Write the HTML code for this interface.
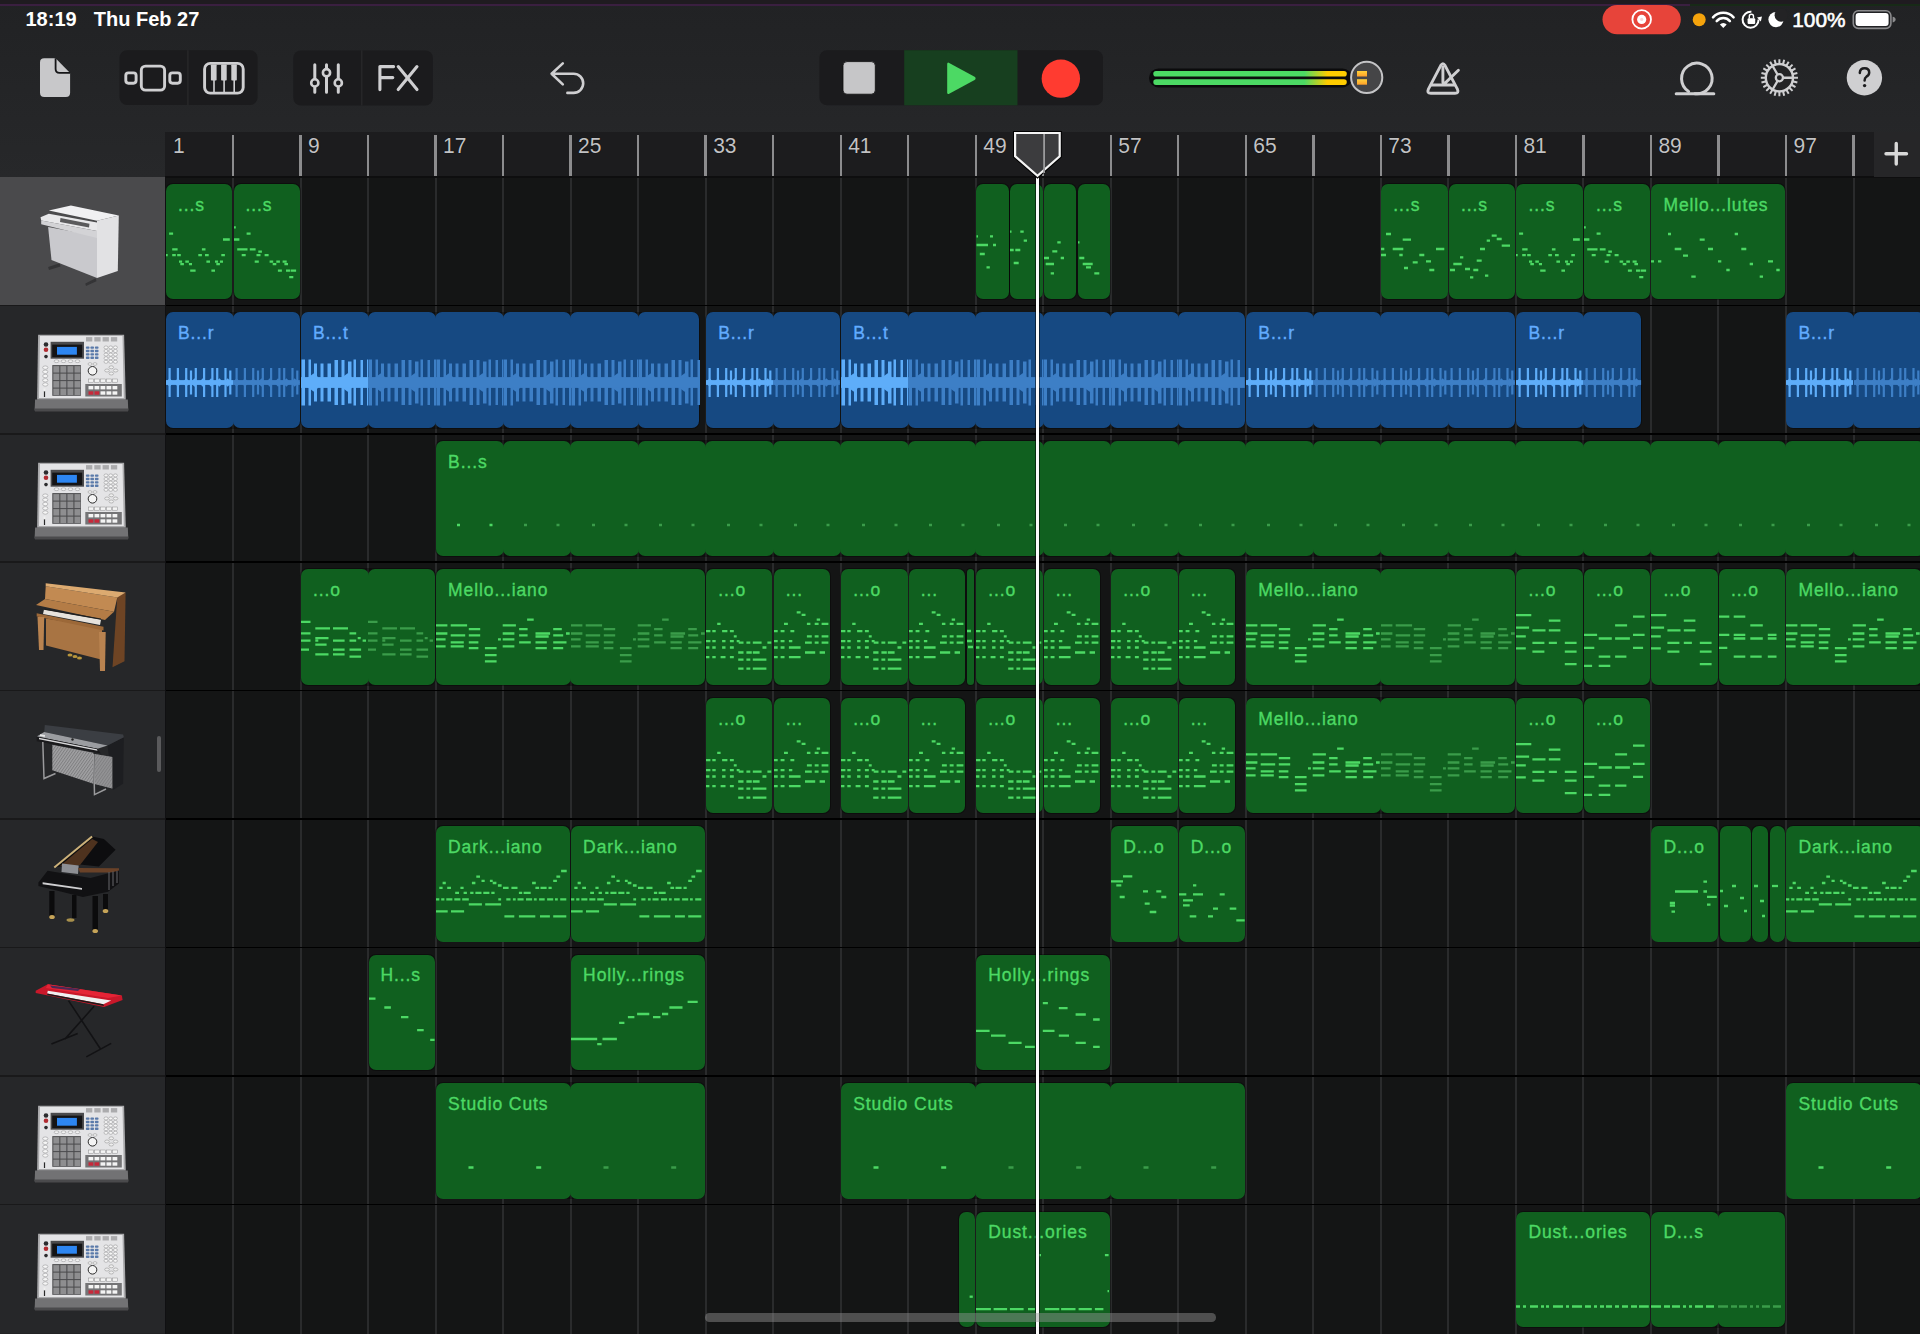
<!DOCTYPE html><html><head><meta charset="utf-8"><style>
*{margin:0;padding:0;box-sizing:border-box}
html,body{width:1920px;height:1334px;overflow:hidden;background:#232325;font-family:"Liberation Sans",sans-serif}
.a{position:absolute}
.lbl{position:absolute;font-size:17.5px;letter-spacing:0.9px;white-space:nowrap;color:#4cd964;-webkit-text-stroke:0.35px #4cd964}
.blbl{color:#62acff;-webkit-text-stroke:0.35px #62acff}
.num{position:absolute;font-size:21px;color:#c2c2c4;top:133px;transform:scaleY(1.06);transform-origin:0 0;text-shadow:0 0 1px #000}
</style></head><body>
<div class="a" style="left:0;top:0;width:1920px;height:178px;background:linear-gradient(#212224,#27282a)"></div>
<div class="a" style="left:0;top:0;width:1920px;height:4px;background:#1f1b20"></div>
<div class="a" style="left:0;top:3.5px;width:1690px;height:2.5px;background:#3a1f40"></div>
<div class="a" style="left:1690px;top:3.5px;width:230px;height:2.5px;background:#172a17"></div>
<div class="a" style="left:25.5px;top:8.2px;font-size:20px;font-weight:bold;color:#fff">18:19</div>
<div class="a" style="left:93.8px;top:8.2px;font-size:20px;font-weight:bold;color:#fff">Thu Feb 27</div>
<div class="a" style="left:165px;top:132px;width:1709px;height:45px;background:#1c1c1e"></div>
<div class="a" style="left:165px;top:177px;width:1755px;height:1157px;background:#141515"></div>
<div class="a" style="left:0;top:176.90px;width:165px;height:128.45px;background:#4a4a4c"></div>
<div class="a" style="left:0;top:305.35px;width:165px;height:128.45px;background:#262729"></div>
<div class="a" style="left:0;top:433.80px;width:165px;height:128.45px;background:#262729"></div>
<div class="a" style="left:0;top:562.25px;width:165px;height:128.45px;background:#262729"></div>
<div class="a" style="left:0;top:690.70px;width:165px;height:128.45px;background:#262729"></div>
<div class="a" style="left:0;top:819.15px;width:165px;height:128.45px;background:#262729"></div>
<div class="a" style="left:0;top:947.60px;width:165px;height:128.45px;background:#262729"></div>
<div class="a" style="left:0;top:1076.05px;width:165px;height:128.45px;background:#262729"></div>
<div class="a" style="left:0;top:1204.50px;width:165px;height:128.45px;background:#262729"></div>
<div class="num" style="left:173.00px">1</div>
<div class="a" style="left:232.02px;top:177px;width:2px;height:1157px;background:#2a2b2c"></div>
<div class="a" style="left:231.82px;top:134.5px;width:2.4px;height:42.5px;background:#8c8c8e"></div>
<div class="a" style="left:299.54px;top:177px;width:2px;height:1157px;background:#2a2b2c"></div>
<div class="a" style="left:299.34px;top:134.5px;width:2.4px;height:42.5px;background:#8c8c8e"></div>
<div class="num" style="left:308.04px">9</div>
<div class="a" style="left:367.06px;top:177px;width:2px;height:1157px;background:#2a2b2c"></div>
<div class="a" style="left:366.86px;top:134.5px;width:2.4px;height:42.5px;background:#8c8c8e"></div>
<div class="a" style="left:434.58px;top:177px;width:2px;height:1157px;background:#2a2b2c"></div>
<div class="a" style="left:434.38px;top:134.5px;width:2.4px;height:42.5px;background:#8c8c8e"></div>
<div class="num" style="left:443.08px">17</div>
<div class="a" style="left:502.10px;top:177px;width:2px;height:1157px;background:#2a2b2c"></div>
<div class="a" style="left:501.90px;top:134.5px;width:2.4px;height:42.5px;background:#8c8c8e"></div>
<div class="a" style="left:569.62px;top:177px;width:2px;height:1157px;background:#2a2b2c"></div>
<div class="a" style="left:569.42px;top:134.5px;width:2.4px;height:42.5px;background:#8c8c8e"></div>
<div class="num" style="left:578.12px">25</div>
<div class="a" style="left:637.14px;top:177px;width:2px;height:1157px;background:#2a2b2c"></div>
<div class="a" style="left:636.94px;top:134.5px;width:2.4px;height:42.5px;background:#8c8c8e"></div>
<div class="a" style="left:704.66px;top:177px;width:2px;height:1157px;background:#2a2b2c"></div>
<div class="a" style="left:704.46px;top:134.5px;width:2.4px;height:42.5px;background:#8c8c8e"></div>
<div class="num" style="left:713.16px">33</div>
<div class="a" style="left:772.18px;top:177px;width:2px;height:1157px;background:#2a2b2c"></div>
<div class="a" style="left:771.98px;top:134.5px;width:2.4px;height:42.5px;background:#8c8c8e"></div>
<div class="a" style="left:839.70px;top:177px;width:2px;height:1157px;background:#2a2b2c"></div>
<div class="a" style="left:839.50px;top:134.5px;width:2.4px;height:42.5px;background:#8c8c8e"></div>
<div class="num" style="left:848.20px">41</div>
<div class="a" style="left:907.22px;top:177px;width:2px;height:1157px;background:#2a2b2c"></div>
<div class="a" style="left:907.02px;top:134.5px;width:2.4px;height:42.5px;background:#8c8c8e"></div>
<div class="a" style="left:974.74px;top:177px;width:2px;height:1157px;background:#2a2b2c"></div>
<div class="a" style="left:974.54px;top:134.5px;width:2.4px;height:42.5px;background:#8c8c8e"></div>
<div class="num" style="left:983.24px">49</div>
<div class="a" style="left:1042.26px;top:177px;width:2px;height:1157px;background:#2a2b2c"></div>
<div class="a" style="left:1042.06px;top:134.5px;width:2.4px;height:42.5px;background:#8c8c8e"></div>
<div class="a" style="left:1109.78px;top:177px;width:2px;height:1157px;background:#2a2b2c"></div>
<div class="a" style="left:1109.58px;top:134.5px;width:2.4px;height:42.5px;background:#8c8c8e"></div>
<div class="num" style="left:1118.28px">57</div>
<div class="a" style="left:1177.30px;top:177px;width:2px;height:1157px;background:#2a2b2c"></div>
<div class="a" style="left:1177.10px;top:134.5px;width:2.4px;height:42.5px;background:#8c8c8e"></div>
<div class="a" style="left:1244.82px;top:177px;width:2px;height:1157px;background:#2a2b2c"></div>
<div class="a" style="left:1244.62px;top:134.5px;width:2.4px;height:42.5px;background:#8c8c8e"></div>
<div class="num" style="left:1253.32px">65</div>
<div class="a" style="left:1312.34px;top:177px;width:2px;height:1157px;background:#2a2b2c"></div>
<div class="a" style="left:1312.14px;top:134.5px;width:2.4px;height:42.5px;background:#8c8c8e"></div>
<div class="a" style="left:1379.86px;top:177px;width:2px;height:1157px;background:#2a2b2c"></div>
<div class="a" style="left:1379.66px;top:134.5px;width:2.4px;height:42.5px;background:#8c8c8e"></div>
<div class="num" style="left:1388.36px">73</div>
<div class="a" style="left:1447.38px;top:177px;width:2px;height:1157px;background:#2a2b2c"></div>
<div class="a" style="left:1447.18px;top:134.5px;width:2.4px;height:42.5px;background:#8c8c8e"></div>
<div class="a" style="left:1514.90px;top:177px;width:2px;height:1157px;background:#2a2b2c"></div>
<div class="a" style="left:1514.70px;top:134.5px;width:2.4px;height:42.5px;background:#8c8c8e"></div>
<div class="num" style="left:1523.40px">81</div>
<div class="a" style="left:1582.42px;top:177px;width:2px;height:1157px;background:#2a2b2c"></div>
<div class="a" style="left:1582.22px;top:134.5px;width:2.4px;height:42.5px;background:#8c8c8e"></div>
<div class="a" style="left:1649.94px;top:177px;width:2px;height:1157px;background:#2a2b2c"></div>
<div class="a" style="left:1649.74px;top:134.5px;width:2.4px;height:42.5px;background:#8c8c8e"></div>
<div class="num" style="left:1658.44px">89</div>
<div class="a" style="left:1717.46px;top:177px;width:2px;height:1157px;background:#2a2b2c"></div>
<div class="a" style="left:1717.26px;top:134.5px;width:2.4px;height:42.5px;background:#8c8c8e"></div>
<div class="a" style="left:1784.98px;top:177px;width:2px;height:1157px;background:#2a2b2c"></div>
<div class="a" style="left:1784.78px;top:134.5px;width:2.4px;height:42.5px;background:#8c8c8e"></div>
<div class="num" style="left:1793.48px">97</div>
<div class="a" style="left:1852.50px;top:177px;width:2px;height:1157px;background:#2a2b2c"></div>
<div class="a" style="left:1852.30px;top:134.5px;width:2.4px;height:42.5px;background:#8c8c8e"></div>
<div class="a" style="left:165px;top:176.10px;width:1755px;height:1.6px;background:#0e0e0f"></div>
<div class="a" style="left:0;top:304.55px;width:165px;height:1.6px;background:#19191a"></div>
<div class="a" style="left:165px;top:304.55px;width:1755px;height:1.6px;background:#000"></div>
<div class="a" style="left:0;top:433.00px;width:165px;height:1.6px;background:#19191a"></div>
<div class="a" style="left:165px;top:433.00px;width:1755px;height:1.6px;background:#000"></div>
<div class="a" style="left:0;top:561.45px;width:165px;height:1.6px;background:#19191a"></div>
<div class="a" style="left:165px;top:561.45px;width:1755px;height:1.6px;background:#000"></div>
<div class="a" style="left:0;top:689.90px;width:165px;height:1.6px;background:#19191a"></div>
<div class="a" style="left:165px;top:689.90px;width:1755px;height:1.6px;background:#000"></div>
<div class="a" style="left:0;top:818.35px;width:165px;height:1.6px;background:#19191a"></div>
<div class="a" style="left:165px;top:818.35px;width:1755px;height:1.6px;background:#000"></div>
<div class="a" style="left:0;top:946.80px;width:165px;height:1.6px;background:#19191a"></div>
<div class="a" style="left:165px;top:946.80px;width:1755px;height:1.6px;background:#000"></div>
<div class="a" style="left:0;top:1075.25px;width:165px;height:1.6px;background:#19191a"></div>
<div class="a" style="left:165px;top:1075.25px;width:1755px;height:1.6px;background:#000"></div>
<div class="a" style="left:0;top:1203.70px;width:165px;height:1.6px;background:#19191a"></div>
<div class="a" style="left:165px;top:1203.70px;width:1755px;height:1.6px;background:#000"></div>
<div class="a" style="left:1874px;top:132px;width:46px;height:45px;background:#262628"></div>
<svg class="a" style="left:1880px;top:138px" width="32" height="32"><path d="M16.25 5.5V26M6 15.75H26.5" stroke="#d8d8d8" stroke-width="3.4" stroke-linecap="round"/></svg>
<div class="a" style="left:165.20px;top:183.10px;width:67.92px;height:117.10px;background:rgba(0,0,0,0.35);border-radius:7.8px"></div>
<div class="a" style="left:166.00px;top:183.90px;width:66.32px;height:115.50px;background:#10601f;border-radius:7px"></div>
<svg class="a" style="left:166.00px;top:183.90px" width="66.3" height="115.5"><path d="M3.1 49.7H7.1M6.2 65.4H11.6M0.0 71.1H1.7M6.2 71.1H9.8M11.2 71.1H14.8M13.0 77.6H16.1M14.3 80.1H17.9M19.3 77.6H22.9M22.9 80.1H26.0M24.2 86.6H29.6M32.3 71.1H35.9M35.9 65.4H39.5M39.0 71.1H42.7M40.4 77.6H44.0M45.4 86.6H49.0M49.0 77.6H52.1M50.3 80.1H53.9M53.9 77.6H57.0M55.3 71.1H58.9M57.0 55.5H63.8" stroke="#4cd964" stroke-width="2.3" fill="none"/></svg>
<div class="lbl" style="left:178.00px;top:194.70px;max-width:52.3px;overflow:hidden">...s</div>
<div class="a" style="left:232.72px;top:183.10px;width:67.92px;height:117.10px;background:rgba(0,0,0,0.35);border-radius:7.8px"></div>
<div class="a" style="left:233.52px;top:183.90px;width:66.32px;height:115.50px;background:#10601f;border-radius:7px"></div>
<svg class="a" style="left:233.52px;top:183.90px" width="66.3" height="115.5"><path d="M0.0 43.4H1.8M0.0 55.5H5.4M12.6 49.7H16.6M3.2 65.4H13.5M15.8 65.4H21.6M24.3 67.7H27.9M7.7 71.1H11.7M22.5 71.1H26.5M30.6 71.1H34.6M20.7 77.6H24.8M35.6 77.6H39.2M38.7 80.1H42.3M42.3 77.6H45.9M48.6 77.6H52.7M50.4 80.1H54.0M43.9 86.6H47.9M52.0 86.6H56.1M56.7 86.6H62.1M55.2 93.1H59.3" stroke="#4cd964" stroke-width="2.3" fill="none"/></svg>
<div class="lbl" style="left:245.52px;top:194.70px;max-width:52.3px;overflow:hidden">...s</div>
<div class="a" style="left:975.44px;top:183.10px;width:34.16px;height:117.10px;background:rgba(0,0,0,0.35);border-radius:7.8px"></div>
<div class="a" style="left:976.24px;top:183.90px;width:32.56px;height:115.50px;background:#10601f;border-radius:7px"></div>
<svg class="a" style="left:976.24px;top:183.90px" width="32.6" height="115.5"><path d="M0.5 52.3H2.0M14.0 52.3H17.0M0.5 61.0H7.0M7.0 61.0H12.0M17.0 61.0H20.0M3.8 70.0H8.8M10.5 83.3H13.8" stroke="#4cd964" stroke-width="2.3" fill="none"/></svg>
<div class="a" style="left:1009.20px;top:183.10px;width:34.16px;height:117.10px;background:rgba(0,0,0,0.35);border-radius:7.8px"></div>
<div class="a" style="left:1010.00px;top:183.90px;width:32.56px;height:115.50px;background:#10601f;border-radius:7px"></div>
<svg class="a" style="left:1010.00px;top:183.90px" width="32.6" height="115.5"><path d="M0.0 47.7H1.5M10.3 47.7H13.7M13.7 56.7H17.0M0.0 66.0H3.7M5.3 66.0H10.3M3.7 79.0H8.7" stroke="#4cd964" stroke-width="2.3" fill="none"/></svg>
<div class="a" style="left:1042.96px;top:183.10px;width:34.16px;height:117.10px;background:rgba(0,0,0,0.35);border-radius:7.8px"></div>
<div class="a" style="left:1043.76px;top:183.90px;width:32.56px;height:115.50px;background:#10601f;border-radius:7px"></div>
<svg class="a" style="left:1043.76px;top:183.90px" width="32.6" height="115.5"><path d="M13.3 58.3H16.7M8.3 67.3H13.3M0.0 74.0H5.0M16.7 74.0H20.0M1.7 80.0H6.7M3.3 80.0H10.0M6.7 89.3H10.0" stroke="#4cd964" stroke-width="2.3" fill="none"/></svg>
<div class="a" style="left:1076.72px;top:183.10px;width:34.16px;height:117.10px;background:rgba(0,0,0,0.35);border-radius:7.8px"></div>
<div class="a" style="left:1077.52px;top:183.90px;width:32.56px;height:115.50px;background:#10601f;border-radius:7px"></div>
<svg class="a" style="left:1077.52px;top:183.90px" width="32.6" height="115.5"><path d="M0.0 58.3H1.5M1.3 74.0H6.3M4.7 80.0H14.7M8.0 83.3H13.0M16.3 89.3H21.3" stroke="#4cd964" stroke-width="2.3" fill="none"/></svg>
<div class="a" style="left:1380.56px;top:183.10px;width:67.92px;height:117.10px;background:rgba(0,0,0,0.35);border-radius:7.8px"></div>
<div class="a" style="left:1381.36px;top:183.90px;width:66.32px;height:115.50px;background:#10601f;border-radius:7px"></div>
<svg class="a" style="left:1381.36px;top:183.90px" width="66.3" height="115.5"><path d="M5.0 50.0H10.0M21.7 55.7H30.0M0.0 65.0H3.3M11.7 65.0H22.3M0.0 71.0H5.0M18.3 71.0H21.7M31.7 78.3H36.7M38.3 71.0H43.3M45.0 77.3H50.0M48.3 86.0H53.3M55.0 65.0H63.3M23.0 84.0H27.0" stroke="#4cd964" stroke-width="2.3" fill="none"/></svg>
<div class="lbl" style="left:1393.36px;top:194.70px;max-width:52.3px;overflow:hidden">...s</div>
<div class="a" style="left:1448.08px;top:183.10px;width:67.92px;height:117.10px;background:rgba(0,0,0,0.35);border-radius:7.8px"></div>
<div class="a" style="left:1448.88px;top:183.90px;width:66.32px;height:115.50px;background:#10601f;border-radius:7px"></div>
<svg class="a" style="left:1448.88px;top:183.90px" width="66.3" height="115.5"><path d="M1.0 86.0H6.0M4.3 80.0H12.7M11.0 73.3H14.3M16.0 85.0H21.0M21.0 93.3H24.3M24.3 86.0H29.3M27.7 76.7H32.7M31.0 65.0H36.0M37.7 56.7H41.0M42.7 51.7H47.7M47.7 55.0H52.7M52.7 61.7H61.0M36.0 91.7H39.3" stroke="#4cd964" stroke-width="2.3" fill="none"/></svg>
<div class="lbl" style="left:1460.88px;top:194.70px;max-width:52.3px;overflow:hidden">...s</div>
<div class="a" style="left:1515.60px;top:183.10px;width:67.92px;height:117.10px;background:rgba(0,0,0,0.35);border-radius:7.8px"></div>
<div class="a" style="left:1516.40px;top:183.90px;width:66.32px;height:115.50px;background:#10601f;border-radius:7px"></div>
<svg class="a" style="left:1516.40px;top:183.90px" width="66.3" height="115.5"><path d="M3.1 49.7H7.1M6.2 65.4H11.6M0.0 71.1H1.7M6.2 71.1H9.8M11.2 71.1H14.8M13.0 77.6H16.1M14.3 80.1H17.9M19.3 77.6H22.9M22.9 80.1H26.0M24.2 86.6H29.6M32.3 71.1H35.9M35.9 65.4H39.5M39.0 71.1H42.7M40.4 77.6H44.0M45.4 86.6H49.0M49.0 77.6H52.1M50.3 80.1H53.9M53.9 77.6H57.0M55.3 71.1H58.9M57.0 55.5H63.8" stroke="#4cd964" stroke-width="2.3" fill="none"/></svg>
<div class="lbl" style="left:1528.40px;top:194.70px;max-width:52.3px;overflow:hidden">...s</div>
<div class="a" style="left:1583.12px;top:183.10px;width:67.92px;height:117.10px;background:rgba(0,0,0,0.35);border-radius:7.8px"></div>
<div class="a" style="left:1583.92px;top:183.90px;width:66.32px;height:115.50px;background:#10601f;border-radius:7px"></div>
<svg class="a" style="left:1583.92px;top:183.90px" width="66.3" height="115.5"><path d="M0.0 43.4H1.8M0.0 55.5H5.4M12.6 49.7H16.6M3.2 65.4H13.5M15.8 65.4H21.6M24.3 67.7H27.9M7.7 71.1H11.7M22.5 71.1H26.5M30.6 71.1H34.6M20.7 77.6H24.8M35.6 77.6H39.2M38.7 80.1H42.3M42.3 77.6H45.9M48.6 77.6H52.7M50.4 80.1H54.0M43.9 86.6H47.9M52.0 86.6H56.1M56.7 86.6H62.1M55.2 93.1H59.3" stroke="#4cd964" stroke-width="2.3" fill="none"/></svg>
<div class="lbl" style="left:1595.92px;top:194.70px;max-width:52.3px;overflow:hidden">...s</div>
<div class="a" style="left:1650.64px;top:183.10px;width:135.44px;height:117.10px;background:rgba(0,0,0,0.35);border-radius:7.8px"></div>
<div class="a" style="left:1651.44px;top:183.90px;width:133.84px;height:115.50px;background:#10601f;border-radius:7px"></div>
<svg class="a" style="left:1651.44px;top:183.90px" width="133.8" height="115.5"><path d="M17.0 50.0H20.0M48.7 55.7H53.7M83.7 50.0H87.0M23.7 65.0H30.3M32.0 71.7H37.0M57.0 65.0H62.0M90.3 65.0H95.3M7.0 77.3H10.3M67.0 77.3H70.3M98.7 80.0H102.0M40.3 92.7H44.7M75.3 86.0H78.7M108.7 92.7H112.0M117.0 77.3H122.0M125.3 86.0H128.7M0.0 77.3H3.0" stroke="#4cd964" stroke-width="2.3" fill="none"/></svg>
<div class="lbl" style="left:1663.44px;top:194.70px;max-width:119.8px;overflow:hidden">Mello...lutes</div>
<div class="a" style="left:165.20px;top:311.55px;width:135.44px;height:117.10px;background:rgba(0,0,0,0.35);border-radius:7.8px"></div>
<div class="a" style="left:166.00px;top:312.35px;width:67.52px;height:115.50px;background:#164982;border-radius:7px"></div>
<div class="a" style="left:232.52px;top:312.35px;width:67.32px;height:115.50px;background:#164982;border-radius:7px"></div>
<svg class="a" style="left:166.00px;top:312.35px" width="67.0" height="116"><g fill="#5eadf9"><rect x="2.5" y="56.0" width="2.2" height="29.0"/><rect x="10.8" y="56.0" width="2.2" height="29.0"/><rect x="19.1" y="56.0" width="2.2" height="29.0"/><rect x="23.9" y="58.5" width="2.2" height="24.0"/><rect x="28.7" y="56.0" width="2.2" height="29.0"/><rect x="37.0" y="56.0" width="2.2" height="29.0"/><rect x="45.3" y="56.0" width="2.2" height="29.0"/><rect x="50.1" y="56.0" width="2.2" height="29.0"/><rect x="58.4" y="56.0" width="2.2" height="29.0"/><rect x="63.2" y="58.5" width="2.2" height="24.0"/><path d="M-0.4 70.5L3.6 66.3L7.6 70.5L3.6 74.7Z"/><path d="M7.9 70.5L11.9 66.3L15.9 70.5L11.9 74.7Z"/><path d="M16.2 70.5L20.2 66.3L24.2 70.5L20.2 74.7Z"/><path d="M24.5 70.5L28.5 66.3L32.5 70.5L28.5 74.7Z"/><path d="M32.8 70.5L36.8 66.3L40.8 70.5L36.8 74.7Z"/><path d="M41.1 70.5L45.1 66.3L49.1 70.5L45.1 74.7Z"/><path d="M49.4 70.5L53.4 66.3L57.4 70.5L53.4 74.7Z"/><path d="M57.7 70.5L61.7 66.3L65.7 70.5L61.7 74.7Z"/><path d="M66.0 70.5L70.0 66.3L74.0 70.5L70.0 74.7Z"/><rect x="0" y="68.1" width="67.0" height="4.8"/></g></svg>
<svg class="a" style="left:233.02px;top:312.35px" width="66.8" height="116"><g fill="#3d7fc6"><rect x="2.5" y="56.0" width="2.2" height="29.0"/><rect x="10.8" y="56.0" width="2.2" height="29.0"/><rect x="19.1" y="56.0" width="2.2" height="29.0"/><rect x="23.9" y="58.5" width="2.2" height="24.0"/><rect x="28.7" y="56.0" width="2.2" height="29.0"/><rect x="37.0" y="56.0" width="2.2" height="29.0"/><rect x="45.3" y="56.0" width="2.2" height="29.0"/><rect x="50.1" y="56.0" width="2.2" height="29.0"/><rect x="58.4" y="56.0" width="2.2" height="29.0"/><rect x="63.2" y="58.5" width="2.2" height="24.0"/><path d="M-0.4 70.5L3.6 66.3L7.6 70.5L3.6 74.7Z"/><path d="M7.9 70.5L11.9 66.3L15.9 70.5L11.9 74.7Z"/><path d="M16.2 70.5L20.2 66.3L24.2 70.5L20.2 74.7Z"/><path d="M24.5 70.5L28.5 66.3L32.5 70.5L28.5 74.7Z"/><path d="M32.8 70.5L36.8 66.3L40.8 70.5L36.8 74.7Z"/><path d="M41.1 70.5L45.1 66.3L49.1 70.5L45.1 74.7Z"/><path d="M49.4 70.5L53.4 66.3L57.4 70.5L53.4 74.7Z"/><path d="M57.7 70.5L61.7 66.3L65.7 70.5L61.7 74.7Z"/><path d="M66.0 70.5L70.0 66.3L74.0 70.5L70.0 74.7Z"/><rect x="0" y="68.1" width="66.8" height="4.8"/></g></svg>
<div class="lbl blbl" style="left:178.00px;top:323.15px;max-width:119.8px;overflow:hidden">B...r</div>
<div class="a" style="left:300.24px;top:311.55px;width:400.06px;height:117.10px;background:rgba(0,0,0,0.35);border-radius:7.8px"></div>
<div class="a" style="left:301.04px;top:312.35px;width:67.52px;height:115.50px;background:#164982;border-radius:7px"></div>
<div class="a" style="left:367.56px;top:312.35px;width:68.52px;height:115.50px;background:#164982;border-radius:7px"></div>
<div class="a" style="left:435.08px;top:312.35px;width:68.52px;height:115.50px;background:#164982;border-radius:7px"></div>
<div class="a" style="left:502.60px;top:312.35px;width:68.52px;height:115.50px;background:#164982;border-radius:7px"></div>
<div class="a" style="left:570.12px;top:312.35px;width:68.52px;height:115.50px;background:#164982;border-radius:7px"></div>
<div class="a" style="left:637.64px;top:312.35px;width:61.86px;height:115.50px;background:#164982;border-radius:7px"></div>
<svg class="a" style="left:301.04px;top:312.35px" width="67.0" height="116"><g fill="#5eadf9"><rect x="0.5" y="47.5" width="3.5" height="46.0"/><rect x="7.5" y="47.5" width="2.5" height="46.0"/><rect x="13.0" y="51.5" width="3" height="38.0"/><rect x="19.5" y="51.5" width="3" height="38.0"/><rect x="26.5" y="51.5" width="3.5" height="38.0"/><rect x="33.5" y="48.0" width="3.5" height="45.0"/><rect x="40.5" y="48.0" width="3" height="45.0"/><rect x="47.0" y="49.5" width="3.5" height="42.0"/><rect x="52.5" y="47.5" width="2.5" height="46.0"/><rect x="59.5" y="48.0" width="2.5" height="45.0"/><rect x="66.0" y="47.5" width="3" height="46.0"/><path d="M0.0 70.5L14.0 60.5L20.0 70.5L14.0 80.5Z"/><path d="M33.8 70.5L47.8 60.5L53.8 70.5L47.8 80.5Z"/><rect x="0" y="65.1" width="67.0" height="10.8"/></g></svg>
<svg class="a" style="left:368.06px;top:312.35px" width="67.5" height="116"><g fill="#3d7fc6"><rect x="0.5" y="47.5" width="3.5" height="46.0"/><rect x="7.5" y="47.5" width="2.5" height="46.0"/><rect x="13.0" y="51.5" width="3" height="38.0"/><rect x="19.5" y="51.5" width="3" height="38.0"/><rect x="26.5" y="51.5" width="3.5" height="38.0"/><rect x="33.5" y="48.0" width="3.5" height="45.0"/><rect x="40.5" y="48.0" width="3" height="45.0"/><rect x="47.0" y="49.5" width="3.5" height="42.0"/><rect x="52.5" y="47.5" width="2.5" height="46.0"/><rect x="59.5" y="48.0" width="2.5" height="45.0"/><rect x="66.0" y="47.5" width="3" height="46.0"/><path d="M0.0 70.5L14.0 60.5L20.0 70.5L14.0 80.5Z"/><path d="M33.8 70.5L47.8 60.5L53.8 70.5L47.8 80.5Z"/><rect x="0" y="65.1" width="67.5" height="10.8"/></g></svg>
<svg class="a" style="left:435.58px;top:312.35px" width="67.5" height="116"><g fill="#3d7fc6"><rect x="0.5" y="47.5" width="3.5" height="46.0"/><rect x="7.5" y="47.5" width="2.5" height="46.0"/><rect x="13.0" y="51.5" width="3" height="38.0"/><rect x="19.5" y="51.5" width="3" height="38.0"/><rect x="26.5" y="51.5" width="3.5" height="38.0"/><rect x="33.5" y="48.0" width="3.5" height="45.0"/><rect x="40.5" y="48.0" width="3" height="45.0"/><rect x="47.0" y="49.5" width="3.5" height="42.0"/><rect x="52.5" y="47.5" width="2.5" height="46.0"/><rect x="59.5" y="48.0" width="2.5" height="45.0"/><rect x="66.0" y="47.5" width="3" height="46.0"/><path d="M0.0 70.5L14.0 60.5L20.0 70.5L14.0 80.5Z"/><path d="M33.8 70.5L47.8 60.5L53.8 70.5L47.8 80.5Z"/><rect x="0" y="65.1" width="67.5" height="10.8"/></g></svg>
<svg class="a" style="left:503.10px;top:312.35px" width="67.5" height="116"><g fill="#3d7fc6"><rect x="0.5" y="47.5" width="3.5" height="46.0"/><rect x="7.5" y="47.5" width="2.5" height="46.0"/><rect x="13.0" y="51.5" width="3" height="38.0"/><rect x="19.5" y="51.5" width="3" height="38.0"/><rect x="26.5" y="51.5" width="3.5" height="38.0"/><rect x="33.5" y="48.0" width="3.5" height="45.0"/><rect x="40.5" y="48.0" width="3" height="45.0"/><rect x="47.0" y="49.5" width="3.5" height="42.0"/><rect x="52.5" y="47.5" width="2.5" height="46.0"/><rect x="59.5" y="48.0" width="2.5" height="45.0"/><rect x="66.0" y="47.5" width="3" height="46.0"/><path d="M0.0 70.5L14.0 60.5L20.0 70.5L14.0 80.5Z"/><path d="M33.8 70.5L47.8 60.5L53.8 70.5L47.8 80.5Z"/><rect x="0" y="65.1" width="67.5" height="10.8"/></g></svg>
<svg class="a" style="left:570.62px;top:312.35px" width="67.5" height="116"><g fill="#3d7fc6"><rect x="0.5" y="47.5" width="3.5" height="46.0"/><rect x="7.5" y="47.5" width="2.5" height="46.0"/><rect x="13.0" y="51.5" width="3" height="38.0"/><rect x="19.5" y="51.5" width="3" height="38.0"/><rect x="26.5" y="51.5" width="3.5" height="38.0"/><rect x="33.5" y="48.0" width="3.5" height="45.0"/><rect x="40.5" y="48.0" width="3" height="45.0"/><rect x="47.0" y="49.5" width="3.5" height="42.0"/><rect x="52.5" y="47.5" width="2.5" height="46.0"/><rect x="59.5" y="48.0" width="2.5" height="45.0"/><rect x="66.0" y="47.5" width="3" height="46.0"/><path d="M0.0 70.5L14.0 60.5L20.0 70.5L14.0 80.5Z"/><path d="M33.8 70.5L47.8 60.5L53.8 70.5L47.8 80.5Z"/><rect x="0" y="65.1" width="67.5" height="10.8"/></g></svg>
<svg class="a" style="left:638.14px;top:312.35px" width="61.4" height="116"><g fill="#3d7fc6"><rect x="0.5" y="47.5" width="3.5" height="46.0"/><rect x="7.5" y="47.5" width="2.5" height="46.0"/><rect x="13.0" y="51.5" width="3" height="38.0"/><rect x="19.5" y="51.5" width="3" height="38.0"/><rect x="26.5" y="51.5" width="3.5" height="38.0"/><rect x="33.5" y="48.0" width="3.5" height="45.0"/><rect x="40.5" y="48.0" width="3" height="45.0"/><rect x="47.0" y="49.5" width="3.5" height="42.0"/><rect x="52.5" y="47.5" width="2.5" height="46.0"/><rect x="59.5" y="48.0" width="2.5" height="45.0"/><path d="M0.0 70.5L14.0 60.5L20.0 70.5L14.0 80.5Z"/><path d="M33.8 70.5L47.8 60.5L53.8 70.5L47.8 80.5Z"/><rect x="0" y="65.1" width="61.4" height="10.8"/></g></svg>
<div class="lbl blbl" style="left:313.04px;top:323.15px;max-width:384.5px;overflow:hidden">B...t</div>
<div class="a" style="left:705.36px;top:311.55px;width:135.44px;height:117.10px;background:rgba(0,0,0,0.35);border-radius:7.8px"></div>
<div class="a" style="left:706.16px;top:312.35px;width:67.52px;height:115.50px;background:#164982;border-radius:7px"></div>
<div class="a" style="left:772.68px;top:312.35px;width:67.32px;height:115.50px;background:#164982;border-radius:7px"></div>
<svg class="a" style="left:706.16px;top:312.35px" width="67.0" height="116"><g fill="#5eadf9"><rect x="2.5" y="56.0" width="2.2" height="29.0"/><rect x="10.8" y="56.0" width="2.2" height="29.0"/><rect x="19.1" y="56.0" width="2.2" height="29.0"/><rect x="23.9" y="58.5" width="2.2" height="24.0"/><rect x="28.7" y="56.0" width="2.2" height="29.0"/><rect x="37.0" y="56.0" width="2.2" height="29.0"/><rect x="45.3" y="56.0" width="2.2" height="29.0"/><rect x="50.1" y="56.0" width="2.2" height="29.0"/><rect x="58.4" y="56.0" width="2.2" height="29.0"/><rect x="63.2" y="58.5" width="2.2" height="24.0"/><path d="M-0.4 70.5L3.6 66.3L7.6 70.5L3.6 74.7Z"/><path d="M7.9 70.5L11.9 66.3L15.9 70.5L11.9 74.7Z"/><path d="M16.2 70.5L20.2 66.3L24.2 70.5L20.2 74.7Z"/><path d="M24.5 70.5L28.5 66.3L32.5 70.5L28.5 74.7Z"/><path d="M32.8 70.5L36.8 66.3L40.8 70.5L36.8 74.7Z"/><path d="M41.1 70.5L45.1 66.3L49.1 70.5L45.1 74.7Z"/><path d="M49.4 70.5L53.4 66.3L57.4 70.5L53.4 74.7Z"/><path d="M57.7 70.5L61.7 66.3L65.7 70.5L61.7 74.7Z"/><path d="M66.0 70.5L70.0 66.3L74.0 70.5L70.0 74.7Z"/><rect x="0" y="68.1" width="67.0" height="4.8"/></g></svg>
<svg class="a" style="left:773.18px;top:312.35px" width="66.8" height="116"><g fill="#3d7fc6"><rect x="2.5" y="56.0" width="2.2" height="29.0"/><rect x="10.8" y="56.0" width="2.2" height="29.0"/><rect x="19.1" y="56.0" width="2.2" height="29.0"/><rect x="23.9" y="58.5" width="2.2" height="24.0"/><rect x="28.7" y="56.0" width="2.2" height="29.0"/><rect x="37.0" y="56.0" width="2.2" height="29.0"/><rect x="45.3" y="56.0" width="2.2" height="29.0"/><rect x="50.1" y="56.0" width="2.2" height="29.0"/><rect x="58.4" y="56.0" width="2.2" height="29.0"/><rect x="63.2" y="58.5" width="2.2" height="24.0"/><path d="M-0.4 70.5L3.6 66.3L7.6 70.5L3.6 74.7Z"/><path d="M7.9 70.5L11.9 66.3L15.9 70.5L11.9 74.7Z"/><path d="M16.2 70.5L20.2 66.3L24.2 70.5L20.2 74.7Z"/><path d="M24.5 70.5L28.5 66.3L32.5 70.5L28.5 74.7Z"/><path d="M32.8 70.5L36.8 66.3L40.8 70.5L36.8 74.7Z"/><path d="M41.1 70.5L45.1 66.3L49.1 70.5L45.1 74.7Z"/><path d="M49.4 70.5L53.4 66.3L57.4 70.5L53.4 74.7Z"/><path d="M57.7 70.5L61.7 66.3L65.7 70.5L61.7 74.7Z"/><path d="M66.0 70.5L70.0 66.3L74.0 70.5L70.0 74.7Z"/><rect x="0" y="68.1" width="66.8" height="4.8"/></g></svg>
<div class="lbl blbl" style="left:718.16px;top:323.15px;max-width:119.8px;overflow:hidden">B...r</div>
<div class="a" style="left:840.40px;top:311.55px;width:405.52px;height:117.10px;background:rgba(0,0,0,0.35);border-radius:7.8px"></div>
<div class="a" style="left:841.20px;top:312.35px;width:67.52px;height:115.50px;background:#164982;border-radius:7px"></div>
<div class="a" style="left:907.72px;top:312.35px;width:68.52px;height:115.50px;background:#164982;border-radius:7px"></div>
<div class="a" style="left:975.24px;top:312.35px;width:68.52px;height:115.50px;background:#164982;border-radius:7px"></div>
<div class="a" style="left:1042.76px;top:312.35px;width:68.52px;height:115.50px;background:#164982;border-radius:7px"></div>
<div class="a" style="left:1110.28px;top:312.35px;width:68.52px;height:115.50px;background:#164982;border-radius:7px"></div>
<div class="a" style="left:1177.80px;top:312.35px;width:67.32px;height:115.50px;background:#164982;border-radius:7px"></div>
<svg class="a" style="left:841.20px;top:312.35px" width="67.0" height="116"><g fill="#5eadf9"><rect x="0.5" y="47.5" width="3.5" height="46.0"/><rect x="7.5" y="47.5" width="2.5" height="46.0"/><rect x="13.0" y="51.5" width="3" height="38.0"/><rect x="19.5" y="51.5" width="3" height="38.0"/><rect x="26.5" y="51.5" width="3.5" height="38.0"/><rect x="33.5" y="48.0" width="3.5" height="45.0"/><rect x="40.5" y="48.0" width="3" height="45.0"/><rect x="47.0" y="49.5" width="3.5" height="42.0"/><rect x="52.5" y="47.5" width="2.5" height="46.0"/><rect x="59.5" y="48.0" width="2.5" height="45.0"/><rect x="66.0" y="47.5" width="3" height="46.0"/><path d="M0.0 70.5L14.0 60.5L20.0 70.5L14.0 80.5Z"/><path d="M33.8 70.5L47.8 60.5L53.8 70.5L47.8 80.5Z"/><rect x="0" y="65.1" width="67.0" height="10.8"/></g></svg>
<svg class="a" style="left:908.22px;top:312.35px" width="67.5" height="116"><g fill="#3d7fc6"><rect x="0.5" y="47.5" width="3.5" height="46.0"/><rect x="7.5" y="47.5" width="2.5" height="46.0"/><rect x="13.0" y="51.5" width="3" height="38.0"/><rect x="19.5" y="51.5" width="3" height="38.0"/><rect x="26.5" y="51.5" width="3.5" height="38.0"/><rect x="33.5" y="48.0" width="3.5" height="45.0"/><rect x="40.5" y="48.0" width="3" height="45.0"/><rect x="47.0" y="49.5" width="3.5" height="42.0"/><rect x="52.5" y="47.5" width="2.5" height="46.0"/><rect x="59.5" y="48.0" width="2.5" height="45.0"/><rect x="66.0" y="47.5" width="3" height="46.0"/><path d="M0.0 70.5L14.0 60.5L20.0 70.5L14.0 80.5Z"/><path d="M33.8 70.5L47.8 60.5L53.8 70.5L47.8 80.5Z"/><rect x="0" y="65.1" width="67.5" height="10.8"/></g></svg>
<svg class="a" style="left:975.74px;top:312.35px" width="67.5" height="116"><g fill="#3d7fc6"><rect x="0.5" y="47.5" width="3.5" height="46.0"/><rect x="7.5" y="47.5" width="2.5" height="46.0"/><rect x="13.0" y="51.5" width="3" height="38.0"/><rect x="19.5" y="51.5" width="3" height="38.0"/><rect x="26.5" y="51.5" width="3.5" height="38.0"/><rect x="33.5" y="48.0" width="3.5" height="45.0"/><rect x="40.5" y="48.0" width="3" height="45.0"/><rect x="47.0" y="49.5" width="3.5" height="42.0"/><rect x="52.5" y="47.5" width="2.5" height="46.0"/><rect x="59.5" y="48.0" width="2.5" height="45.0"/><rect x="66.0" y="47.5" width="3" height="46.0"/><path d="M0.0 70.5L14.0 60.5L20.0 70.5L14.0 80.5Z"/><path d="M33.8 70.5L47.8 60.5L53.8 70.5L47.8 80.5Z"/><rect x="0" y="65.1" width="67.5" height="10.8"/></g></svg>
<svg class="a" style="left:1043.26px;top:312.35px" width="67.5" height="116"><g fill="#3d7fc6"><rect x="0.5" y="47.5" width="3.5" height="46.0"/><rect x="7.5" y="47.5" width="2.5" height="46.0"/><rect x="13.0" y="51.5" width="3" height="38.0"/><rect x="19.5" y="51.5" width="3" height="38.0"/><rect x="26.5" y="51.5" width="3.5" height="38.0"/><rect x="33.5" y="48.0" width="3.5" height="45.0"/><rect x="40.5" y="48.0" width="3" height="45.0"/><rect x="47.0" y="49.5" width="3.5" height="42.0"/><rect x="52.5" y="47.5" width="2.5" height="46.0"/><rect x="59.5" y="48.0" width="2.5" height="45.0"/><rect x="66.0" y="47.5" width="3" height="46.0"/><path d="M0.0 70.5L14.0 60.5L20.0 70.5L14.0 80.5Z"/><path d="M33.8 70.5L47.8 60.5L53.8 70.5L47.8 80.5Z"/><rect x="0" y="65.1" width="67.5" height="10.8"/></g></svg>
<svg class="a" style="left:1110.78px;top:312.35px" width="67.5" height="116"><g fill="#3d7fc6"><rect x="0.5" y="47.5" width="3.5" height="46.0"/><rect x="7.5" y="47.5" width="2.5" height="46.0"/><rect x="13.0" y="51.5" width="3" height="38.0"/><rect x="19.5" y="51.5" width="3" height="38.0"/><rect x="26.5" y="51.5" width="3.5" height="38.0"/><rect x="33.5" y="48.0" width="3.5" height="45.0"/><rect x="40.5" y="48.0" width="3" height="45.0"/><rect x="47.0" y="49.5" width="3.5" height="42.0"/><rect x="52.5" y="47.5" width="2.5" height="46.0"/><rect x="59.5" y="48.0" width="2.5" height="45.0"/><rect x="66.0" y="47.5" width="3" height="46.0"/><path d="M0.0 70.5L14.0 60.5L20.0 70.5L14.0 80.5Z"/><path d="M33.8 70.5L47.8 60.5L53.8 70.5L47.8 80.5Z"/><rect x="0" y="65.1" width="67.5" height="10.8"/></g></svg>
<svg class="a" style="left:1178.30px;top:312.35px" width="66.8" height="116"><g fill="#3d7fc6"><rect x="0.5" y="47.5" width="3.5" height="46.0"/><rect x="7.5" y="47.5" width="2.5" height="46.0"/><rect x="13.0" y="51.5" width="3" height="38.0"/><rect x="19.5" y="51.5" width="3" height="38.0"/><rect x="26.5" y="51.5" width="3.5" height="38.0"/><rect x="33.5" y="48.0" width="3.5" height="45.0"/><rect x="40.5" y="48.0" width="3" height="45.0"/><rect x="47.0" y="49.5" width="3.5" height="42.0"/><rect x="52.5" y="47.5" width="2.5" height="46.0"/><rect x="59.5" y="48.0" width="2.5" height="45.0"/><path d="M0.0 70.5L14.0 60.5L20.0 70.5L14.0 80.5Z"/><path d="M33.8 70.5L47.8 60.5L53.8 70.5L47.8 80.5Z"/><rect x="0" y="65.1" width="66.8" height="10.8"/></g></svg>
<div class="lbl blbl" style="left:853.20px;top:323.15px;max-width:389.9px;overflow:hidden">B...t</div>
<div class="a" style="left:1245.52px;top:311.55px;width:270.48px;height:117.10px;background:rgba(0,0,0,0.35);border-radius:7.8px"></div>
<div class="a" style="left:1246.32px;top:312.35px;width:67.52px;height:115.50px;background:#164982;border-radius:7px"></div>
<div class="a" style="left:1312.84px;top:312.35px;width:68.52px;height:115.50px;background:#164982;border-radius:7px"></div>
<div class="a" style="left:1380.36px;top:312.35px;width:68.52px;height:115.50px;background:#164982;border-radius:7px"></div>
<div class="a" style="left:1447.88px;top:312.35px;width:67.32px;height:115.50px;background:#164982;border-radius:7px"></div>
<svg class="a" style="left:1246.32px;top:312.35px" width="67.0" height="116"><g fill="#5eadf9"><rect x="2.5" y="56.0" width="2.2" height="29.0"/><rect x="10.8" y="56.0" width="2.2" height="29.0"/><rect x="19.1" y="56.0" width="2.2" height="29.0"/><rect x="23.9" y="58.5" width="2.2" height="24.0"/><rect x="28.7" y="56.0" width="2.2" height="29.0"/><rect x="37.0" y="56.0" width="2.2" height="29.0"/><rect x="45.3" y="56.0" width="2.2" height="29.0"/><rect x="50.1" y="56.0" width="2.2" height="29.0"/><rect x="58.4" y="56.0" width="2.2" height="29.0"/><rect x="63.2" y="58.5" width="2.2" height="24.0"/><path d="M-0.4 70.5L3.6 66.3L7.6 70.5L3.6 74.7Z"/><path d="M7.9 70.5L11.9 66.3L15.9 70.5L11.9 74.7Z"/><path d="M16.2 70.5L20.2 66.3L24.2 70.5L20.2 74.7Z"/><path d="M24.5 70.5L28.5 66.3L32.5 70.5L28.5 74.7Z"/><path d="M32.8 70.5L36.8 66.3L40.8 70.5L36.8 74.7Z"/><path d="M41.1 70.5L45.1 66.3L49.1 70.5L45.1 74.7Z"/><path d="M49.4 70.5L53.4 66.3L57.4 70.5L53.4 74.7Z"/><path d="M57.7 70.5L61.7 66.3L65.7 70.5L61.7 74.7Z"/><path d="M66.0 70.5L70.0 66.3L74.0 70.5L70.0 74.7Z"/><rect x="0" y="68.1" width="67.0" height="4.8"/></g></svg>
<svg class="a" style="left:1313.34px;top:312.35px" width="67.5" height="116"><g fill="#3d7fc6"><rect x="2.5" y="56.0" width="2.2" height="29.0"/><rect x="10.8" y="56.0" width="2.2" height="29.0"/><rect x="19.1" y="56.0" width="2.2" height="29.0"/><rect x="23.9" y="58.5" width="2.2" height="24.0"/><rect x="28.7" y="56.0" width="2.2" height="29.0"/><rect x="37.0" y="56.0" width="2.2" height="29.0"/><rect x="45.3" y="56.0" width="2.2" height="29.0"/><rect x="50.1" y="56.0" width="2.2" height="29.0"/><rect x="58.4" y="56.0" width="2.2" height="29.0"/><rect x="63.2" y="58.5" width="2.2" height="24.0"/><path d="M-0.4 70.5L3.6 66.3L7.6 70.5L3.6 74.7Z"/><path d="M7.9 70.5L11.9 66.3L15.9 70.5L11.9 74.7Z"/><path d="M16.2 70.5L20.2 66.3L24.2 70.5L20.2 74.7Z"/><path d="M24.5 70.5L28.5 66.3L32.5 70.5L28.5 74.7Z"/><path d="M32.8 70.5L36.8 66.3L40.8 70.5L36.8 74.7Z"/><path d="M41.1 70.5L45.1 66.3L49.1 70.5L45.1 74.7Z"/><path d="M49.4 70.5L53.4 66.3L57.4 70.5L53.4 74.7Z"/><path d="M57.7 70.5L61.7 66.3L65.7 70.5L61.7 74.7Z"/><path d="M66.0 70.5L70.0 66.3L74.0 70.5L70.0 74.7Z"/><rect x="0" y="68.1" width="67.5" height="4.8"/></g></svg>
<svg class="a" style="left:1380.86px;top:312.35px" width="67.5" height="116"><g fill="#3d7fc6"><rect x="2.5" y="56.0" width="2.2" height="29.0"/><rect x="10.8" y="56.0" width="2.2" height="29.0"/><rect x="19.1" y="56.0" width="2.2" height="29.0"/><rect x="23.9" y="58.5" width="2.2" height="24.0"/><rect x="28.7" y="56.0" width="2.2" height="29.0"/><rect x="37.0" y="56.0" width="2.2" height="29.0"/><rect x="45.3" y="56.0" width="2.2" height="29.0"/><rect x="50.1" y="56.0" width="2.2" height="29.0"/><rect x="58.4" y="56.0" width="2.2" height="29.0"/><rect x="63.2" y="58.5" width="2.2" height="24.0"/><path d="M-0.4 70.5L3.6 66.3L7.6 70.5L3.6 74.7Z"/><path d="M7.9 70.5L11.9 66.3L15.9 70.5L11.9 74.7Z"/><path d="M16.2 70.5L20.2 66.3L24.2 70.5L20.2 74.7Z"/><path d="M24.5 70.5L28.5 66.3L32.5 70.5L28.5 74.7Z"/><path d="M32.8 70.5L36.8 66.3L40.8 70.5L36.8 74.7Z"/><path d="M41.1 70.5L45.1 66.3L49.1 70.5L45.1 74.7Z"/><path d="M49.4 70.5L53.4 66.3L57.4 70.5L53.4 74.7Z"/><path d="M57.7 70.5L61.7 66.3L65.7 70.5L61.7 74.7Z"/><path d="M66.0 70.5L70.0 66.3L74.0 70.5L70.0 74.7Z"/><rect x="0" y="68.1" width="67.5" height="4.8"/></g></svg>
<svg class="a" style="left:1448.38px;top:312.35px" width="66.8" height="116"><g fill="#3d7fc6"><rect x="2.5" y="56.0" width="2.2" height="29.0"/><rect x="10.8" y="56.0" width="2.2" height="29.0"/><rect x="19.1" y="56.0" width="2.2" height="29.0"/><rect x="23.9" y="58.5" width="2.2" height="24.0"/><rect x="28.7" y="56.0" width="2.2" height="29.0"/><rect x="37.0" y="56.0" width="2.2" height="29.0"/><rect x="45.3" y="56.0" width="2.2" height="29.0"/><rect x="50.1" y="56.0" width="2.2" height="29.0"/><rect x="58.4" y="56.0" width="2.2" height="29.0"/><rect x="63.2" y="58.5" width="2.2" height="24.0"/><path d="M-0.4 70.5L3.6 66.3L7.6 70.5L3.6 74.7Z"/><path d="M7.9 70.5L11.9 66.3L15.9 70.5L11.9 74.7Z"/><path d="M16.2 70.5L20.2 66.3L24.2 70.5L20.2 74.7Z"/><path d="M24.5 70.5L28.5 66.3L32.5 70.5L28.5 74.7Z"/><path d="M32.8 70.5L36.8 66.3L40.8 70.5L36.8 74.7Z"/><path d="M41.1 70.5L45.1 66.3L49.1 70.5L45.1 74.7Z"/><path d="M49.4 70.5L53.4 66.3L57.4 70.5L53.4 74.7Z"/><path d="M57.7 70.5L61.7 66.3L65.7 70.5L61.7 74.7Z"/><path d="M66.0 70.5L70.0 66.3L74.0 70.5L70.0 74.7Z"/><rect x="0" y="68.1" width="66.8" height="4.8"/></g></svg>
<div class="lbl blbl" style="left:1258.32px;top:323.15px;max-width:254.9px;overflow:hidden">B...r</div>
<div class="a" style="left:1515.60px;top:311.55px;width:126.70px;height:117.10px;background:rgba(0,0,0,0.35);border-radius:7.8px"></div>
<div class="a" style="left:1516.40px;top:312.35px;width:67.52px;height:115.50px;background:#164982;border-radius:7px"></div>
<div class="a" style="left:1582.92px;top:312.35px;width:58.58px;height:115.50px;background:#164982;border-radius:7px"></div>
<svg class="a" style="left:1516.40px;top:312.35px" width="67.0" height="116"><g fill="#5eadf9"><rect x="2.5" y="56.0" width="2.2" height="29.0"/><rect x="10.8" y="56.0" width="2.2" height="29.0"/><rect x="19.1" y="56.0" width="2.2" height="29.0"/><rect x="23.9" y="58.5" width="2.2" height="24.0"/><rect x="28.7" y="56.0" width="2.2" height="29.0"/><rect x="37.0" y="56.0" width="2.2" height="29.0"/><rect x="45.3" y="56.0" width="2.2" height="29.0"/><rect x="50.1" y="56.0" width="2.2" height="29.0"/><rect x="58.4" y="56.0" width="2.2" height="29.0"/><rect x="63.2" y="58.5" width="2.2" height="24.0"/><path d="M-0.4 70.5L3.6 66.3L7.6 70.5L3.6 74.7Z"/><path d="M7.9 70.5L11.9 66.3L15.9 70.5L11.9 74.7Z"/><path d="M16.2 70.5L20.2 66.3L24.2 70.5L20.2 74.7Z"/><path d="M24.5 70.5L28.5 66.3L32.5 70.5L28.5 74.7Z"/><path d="M32.8 70.5L36.8 66.3L40.8 70.5L36.8 74.7Z"/><path d="M41.1 70.5L45.1 66.3L49.1 70.5L45.1 74.7Z"/><path d="M49.4 70.5L53.4 66.3L57.4 70.5L53.4 74.7Z"/><path d="M57.7 70.5L61.7 66.3L65.7 70.5L61.7 74.7Z"/><path d="M66.0 70.5L70.0 66.3L74.0 70.5L70.0 74.7Z"/><rect x="0" y="68.1" width="67.0" height="4.8"/></g></svg>
<svg class="a" style="left:1583.42px;top:312.35px" width="58.1" height="116"><g fill="#3d7fc6"><rect x="2.5" y="56.0" width="2.2" height="29.0"/><rect x="10.8" y="56.0" width="2.2" height="29.0"/><rect x="19.1" y="56.0" width="2.2" height="29.0"/><rect x="23.9" y="58.5" width="2.2" height="24.0"/><rect x="28.7" y="56.0" width="2.2" height="29.0"/><rect x="37.0" y="56.0" width="2.2" height="29.0"/><rect x="45.3" y="56.0" width="2.2" height="29.0"/><rect x="50.1" y="56.0" width="2.2" height="29.0"/><path d="M-0.4 70.5L3.6 66.3L7.6 70.5L3.6 74.7Z"/><path d="M7.9 70.5L11.9 66.3L15.9 70.5L11.9 74.7Z"/><path d="M16.2 70.5L20.2 66.3L24.2 70.5L20.2 74.7Z"/><path d="M24.5 70.5L28.5 66.3L32.5 70.5L28.5 74.7Z"/><path d="M32.8 70.5L36.8 66.3L40.8 70.5L36.8 74.7Z"/><path d="M41.1 70.5L45.1 66.3L49.1 70.5L45.1 74.7Z"/><path d="M49.4 70.5L53.4 66.3L57.4 70.5L53.4 74.7Z"/><rect x="0" y="68.1" width="58.1" height="4.8"/></g></svg>
<div class="lbl blbl" style="left:1528.40px;top:323.15px;max-width:111.1px;overflow:hidden">B...r</div>
<div class="a" style="left:1785.68px;top:311.55px;width:140.12px;height:117.10px;background:rgba(0,0,0,0.35);border-radius:7.8px"></div>
<div class="a" style="left:1786.48px;top:312.35px;width:67.52px;height:115.50px;background:#164982;border-radius:7px"></div>
<div class="a" style="left:1853.00px;top:312.35px;width:72.00px;height:115.50px;background:#164982;border-radius:7px"></div>
<svg class="a" style="left:1786.48px;top:312.35px" width="67.0" height="116"><g fill="#5eadf9"><rect x="2.5" y="56.0" width="2.2" height="29.0"/><rect x="10.8" y="56.0" width="2.2" height="29.0"/><rect x="19.1" y="56.0" width="2.2" height="29.0"/><rect x="23.9" y="58.5" width="2.2" height="24.0"/><rect x="28.7" y="56.0" width="2.2" height="29.0"/><rect x="37.0" y="56.0" width="2.2" height="29.0"/><rect x="45.3" y="56.0" width="2.2" height="29.0"/><rect x="50.1" y="56.0" width="2.2" height="29.0"/><rect x="58.4" y="56.0" width="2.2" height="29.0"/><rect x="63.2" y="58.5" width="2.2" height="24.0"/><path d="M-0.4 70.5L3.6 66.3L7.6 70.5L3.6 74.7Z"/><path d="M7.9 70.5L11.9 66.3L15.9 70.5L11.9 74.7Z"/><path d="M16.2 70.5L20.2 66.3L24.2 70.5L20.2 74.7Z"/><path d="M24.5 70.5L28.5 66.3L32.5 70.5L28.5 74.7Z"/><path d="M32.8 70.5L36.8 66.3L40.8 70.5L36.8 74.7Z"/><path d="M41.1 70.5L45.1 66.3L49.1 70.5L45.1 74.7Z"/><path d="M49.4 70.5L53.4 66.3L57.4 70.5L53.4 74.7Z"/><path d="M57.7 70.5L61.7 66.3L65.7 70.5L61.7 74.7Z"/><path d="M66.0 70.5L70.0 66.3L74.0 70.5L70.0 74.7Z"/><rect x="0" y="68.1" width="67.0" height="4.8"/></g></svg>
<svg class="a" style="left:1853.50px;top:312.35px" width="71.5" height="116"><g fill="#3d7fc6"><rect x="2.5" y="56.0" width="2.2" height="29.0"/><rect x="10.8" y="56.0" width="2.2" height="29.0"/><rect x="19.1" y="56.0" width="2.2" height="29.0"/><rect x="23.9" y="58.5" width="2.2" height="24.0"/><rect x="28.7" y="56.0" width="2.2" height="29.0"/><rect x="37.0" y="56.0" width="2.2" height="29.0"/><rect x="45.3" y="56.0" width="2.2" height="29.0"/><rect x="50.1" y="56.0" width="2.2" height="29.0"/><rect x="58.4" y="56.0" width="2.2" height="29.0"/><rect x="63.2" y="58.5" width="2.2" height="24.0"/><path d="M-0.4 70.5L3.6 66.3L7.6 70.5L3.6 74.7Z"/><path d="M7.9 70.5L11.9 66.3L15.9 70.5L11.9 74.7Z"/><path d="M16.2 70.5L20.2 66.3L24.2 70.5L20.2 74.7Z"/><path d="M24.5 70.5L28.5 66.3L32.5 70.5L28.5 74.7Z"/><path d="M32.8 70.5L36.8 66.3L40.8 70.5L36.8 74.7Z"/><path d="M41.1 70.5L45.1 66.3L49.1 70.5L45.1 74.7Z"/><path d="M49.4 70.5L53.4 66.3L57.4 70.5L53.4 74.7Z"/><path d="M57.7 70.5L61.7 66.3L65.7 70.5L61.7 74.7Z"/><path d="M66.0 70.5L70.0 66.3L74.0 70.5L70.0 74.7Z"/><rect x="0" y="68.1" width="71.5" height="4.8"/></g></svg>
<div class="lbl blbl" style="left:1798.48px;top:323.15px;max-width:124.5px;overflow:hidden">B...r</div>
<div class="a" style="left:435.28px;top:440.00px;width:1490.52px;height:117.10px;background:rgba(0,0,0,0.35);border-radius:7.8px"></div>
<div class="a" style="left:436.08px;top:440.80px;width:67.52px;height:115.50px;background:#10601f;border-radius:7px"></div>
<div class="a" style="left:502.60px;top:440.80px;width:68.52px;height:115.50px;background:#10601f;border-radius:7px"></div>
<div class="a" style="left:570.12px;top:440.80px;width:68.52px;height:115.50px;background:#10601f;border-radius:7px"></div>
<div class="a" style="left:637.64px;top:440.80px;width:68.52px;height:115.50px;background:#10601f;border-radius:7px"></div>
<div class="a" style="left:705.16px;top:440.80px;width:68.52px;height:115.50px;background:#10601f;border-radius:7px"></div>
<div class="a" style="left:772.68px;top:440.80px;width:68.52px;height:115.50px;background:#10601f;border-radius:7px"></div>
<div class="a" style="left:840.20px;top:440.80px;width:68.52px;height:115.50px;background:#10601f;border-radius:7px"></div>
<div class="a" style="left:907.72px;top:440.80px;width:68.52px;height:115.50px;background:#10601f;border-radius:7px"></div>
<div class="a" style="left:975.24px;top:440.80px;width:68.52px;height:115.50px;background:#10601f;border-radius:7px"></div>
<div class="a" style="left:1042.76px;top:440.80px;width:68.52px;height:115.50px;background:#10601f;border-radius:7px"></div>
<div class="a" style="left:1110.28px;top:440.80px;width:68.52px;height:115.50px;background:#10601f;border-radius:7px"></div>
<div class="a" style="left:1177.80px;top:440.80px;width:68.52px;height:115.50px;background:#10601f;border-radius:7px"></div>
<div class="a" style="left:1245.32px;top:440.80px;width:68.52px;height:115.50px;background:#10601f;border-radius:7px"></div>
<div class="a" style="left:1312.84px;top:440.80px;width:68.52px;height:115.50px;background:#10601f;border-radius:7px"></div>
<div class="a" style="left:1380.36px;top:440.80px;width:68.52px;height:115.50px;background:#10601f;border-radius:7px"></div>
<div class="a" style="left:1447.88px;top:440.80px;width:68.52px;height:115.50px;background:#10601f;border-radius:7px"></div>
<div class="a" style="left:1515.40px;top:440.80px;width:68.52px;height:115.50px;background:#10601f;border-radius:7px"></div>
<div class="a" style="left:1582.92px;top:440.80px;width:68.52px;height:115.50px;background:#10601f;border-radius:7px"></div>
<div class="a" style="left:1650.44px;top:440.80px;width:68.52px;height:115.50px;background:#10601f;border-radius:7px"></div>
<div class="a" style="left:1717.96px;top:440.80px;width:68.52px;height:115.50px;background:#10601f;border-radius:7px"></div>
<div class="a" style="left:1785.48px;top:440.80px;width:68.52px;height:115.50px;background:#10601f;border-radius:7px"></div>
<div class="a" style="left:1853.00px;top:440.80px;width:72.00px;height:115.50px;background:#10601f;border-radius:7px"></div>
<svg class="a" style="left:436.08px;top:440.80px" width="67.0" height="115.5"><path d="M21.0 84.0H24.0M53.5 84.0H56.5" stroke="#4cd964" stroke-width="2.3" fill="none"/></svg>
<svg class="a" style="left:503.10px;top:440.80px" width="67.5" height="115.5"><path d="M21.0 84.0H24.0M53.5 84.0H56.5" stroke="#3a9c4a" stroke-width="2.3" fill="none"/></svg>
<svg class="a" style="left:570.62px;top:440.80px" width="67.5" height="115.5"><path d="M21.0 84.0H24.0M53.5 84.0H56.5" stroke="#3a9c4a" stroke-width="2.3" fill="none"/></svg>
<svg class="a" style="left:638.14px;top:440.80px" width="67.5" height="115.5"><path d="M21.0 84.0H24.0M53.5 84.0H56.5" stroke="#3a9c4a" stroke-width="2.3" fill="none"/></svg>
<svg class="a" style="left:705.66px;top:440.80px" width="67.5" height="115.5"><path d="M21.0 84.0H24.0M53.5 84.0H56.5" stroke="#3a9c4a" stroke-width="2.3" fill="none"/></svg>
<svg class="a" style="left:773.18px;top:440.80px" width="67.5" height="115.5"><path d="M21.0 84.0H24.0M53.5 84.0H56.5" stroke="#3a9c4a" stroke-width="2.3" fill="none"/></svg>
<svg class="a" style="left:840.70px;top:440.80px" width="67.5" height="115.5"><path d="M21.0 84.0H24.0M53.5 84.0H56.5" stroke="#3a9c4a" stroke-width="2.3" fill="none"/></svg>
<svg class="a" style="left:908.22px;top:440.80px" width="67.5" height="115.5"><path d="M21.0 84.0H24.0M53.5 84.0H56.5" stroke="#3a9c4a" stroke-width="2.3" fill="none"/></svg>
<svg class="a" style="left:975.74px;top:440.80px" width="67.5" height="115.5"><path d="M21.0 84.0H24.0M53.5 84.0H56.5" stroke="#3a9c4a" stroke-width="2.3" fill="none"/></svg>
<svg class="a" style="left:1043.26px;top:440.80px" width="67.5" height="115.5"><path d="M21.0 84.0H24.0M53.5 84.0H56.5" stroke="#3a9c4a" stroke-width="2.3" fill="none"/></svg>
<svg class="a" style="left:1110.78px;top:440.80px" width="67.5" height="115.5"><path d="M21.0 84.0H24.0M53.5 84.0H56.5" stroke="#3a9c4a" stroke-width="2.3" fill="none"/></svg>
<svg class="a" style="left:1178.30px;top:440.80px" width="67.5" height="115.5"><path d="M21.0 84.0H24.0M53.5 84.0H56.5" stroke="#3a9c4a" stroke-width="2.3" fill="none"/></svg>
<svg class="a" style="left:1245.82px;top:440.80px" width="67.5" height="115.5"><path d="M21.0 84.0H24.0M53.5 84.0H56.5" stroke="#3a9c4a" stroke-width="2.3" fill="none"/></svg>
<svg class="a" style="left:1313.34px;top:440.80px" width="67.5" height="115.5"><path d="M21.0 84.0H24.0M53.5 84.0H56.5" stroke="#3a9c4a" stroke-width="2.3" fill="none"/></svg>
<svg class="a" style="left:1380.86px;top:440.80px" width="67.5" height="115.5"><path d="M21.0 84.0H24.0M53.5 84.0H56.5" stroke="#3a9c4a" stroke-width="2.3" fill="none"/></svg>
<svg class="a" style="left:1448.38px;top:440.80px" width="67.5" height="115.5"><path d="M21.0 84.0H24.0M53.5 84.0H56.5" stroke="#3a9c4a" stroke-width="2.3" fill="none"/></svg>
<svg class="a" style="left:1515.90px;top:440.80px" width="67.5" height="115.5"><path d="M21.0 84.0H24.0M53.5 84.0H56.5" stroke="#3a9c4a" stroke-width="2.3" fill="none"/></svg>
<svg class="a" style="left:1583.42px;top:440.80px" width="67.5" height="115.5"><path d="M21.0 84.0H24.0M53.5 84.0H56.5" stroke="#3a9c4a" stroke-width="2.3" fill="none"/></svg>
<svg class="a" style="left:1650.94px;top:440.80px" width="67.5" height="115.5"><path d="M21.0 84.0H24.0M53.5 84.0H56.5" stroke="#3a9c4a" stroke-width="2.3" fill="none"/></svg>
<svg class="a" style="left:1718.46px;top:440.80px" width="67.5" height="115.5"><path d="M21.0 84.0H24.0M53.5 84.0H56.5" stroke="#3a9c4a" stroke-width="2.3" fill="none"/></svg>
<svg class="a" style="left:1785.98px;top:440.80px" width="67.5" height="115.5"><path d="M21.0 84.0H24.0M53.5 84.0H56.5" stroke="#3a9c4a" stroke-width="2.3" fill="none"/></svg>
<svg class="a" style="left:1853.50px;top:440.80px" width="71.5" height="115.5"><path d="M21.0 84.0H24.0M53.5 84.0H56.5" stroke="#3a9c4a" stroke-width="2.3" fill="none"/></svg>
<div class="lbl" style="left:448.08px;top:451.60px;max-width:1474.9px;overflow:hidden">B...s</div>
<div class="a" style="left:300.24px;top:568.45px;width:135.44px;height:117.10px;background:rgba(0,0,0,0.35);border-radius:7.8px"></div>
<div class="a" style="left:301.04px;top:569.25px;width:67.52px;height:115.50px;background:#10601f;border-radius:7px"></div>
<div class="a" style="left:367.56px;top:569.25px;width:67.32px;height:115.50px;background:#10601f;border-radius:7px"></div>
<svg class="a" style="left:301.04px;top:569.25px" width="67.0" height="115.5"><path d="M0.0 52.8H9.5M14.3 59.4H29.0M32.0 59.4H47.0M0.0 64.3H9.5M48.5 64.3H55.2M14.3 69.1H27.5M56.7 69.1H59.7M0.0 71.6H9.5M14.3 71.6H17.3M32.0 71.6H43.6M48.5 71.6H55.2M61.6 71.6H65.0M14.3 75.7H25.6M0.0 80.6H8.0M32.0 80.6H43.6M48.5 80.6H60.1M14.3 85.4H27.5M32.0 85.4H43.6M48.5 87.7H60.1" stroke="#4cd964" stroke-width="2.3" fill="none"/></svg>
<svg class="a" style="left:368.06px;top:569.25px" width="66.8" height="115.5"><path d="M0.0 52.8H9.5M14.3 59.4H29.0M32.0 59.4H47.0M0.0 64.3H9.5M48.5 64.3H55.2M14.3 69.1H27.5M56.7 69.1H59.7M0.0 71.6H9.5M14.3 71.6H17.3M32.0 71.6H43.6M48.5 71.6H55.2M61.6 71.6H65.0M14.3 75.7H25.6M0.0 80.6H8.0M32.0 80.6H43.6M48.5 80.6H60.1M14.3 85.4H27.5M32.0 85.4H43.6M48.5 87.7H60.1" stroke="#3a9c4a" stroke-width="2.3" fill="none"/></svg>
<div class="lbl" style="left:313.04px;top:580.05px;max-width:119.8px;overflow:hidden">...o</div>
<div class="a" style="left:435.28px;top:568.45px;width:270.48px;height:117.10px;background:rgba(0,0,0,0.35);border-radius:7.8px"></div>
<div class="a" style="left:436.08px;top:569.25px;width:135.04px;height:115.50px;background:#10601f;border-radius:7px"></div>
<div class="a" style="left:570.12px;top:569.25px;width:134.84px;height:115.50px;background:#10601f;border-radius:7px"></div>
<svg class="a" style="left:436.08px;top:569.25px" width="134.5" height="115.5"><path d="M0.0 56.4H11.4M14.7 56.4H31.1M0.0 64.5H11.4M14.7 66.4H29.2M0.0 70.3H9.6M14.7 73.3H27.8M0.0 77.3H9.6M14.7 77.3H27.8M32.8 60.2H44.2M32.8 66.4H44.2M32.8 73.3H42.4M32.8 79.2H42.4M48.9 79.2H60.6M48.9 86.2H60.6M48.9 92.3H60.6M62.0 70.3H64.9M66.7 56.4H79.9M66.7 64.5H78.4M66.7 70.3H78.4M66.7 77.3H78.4M91.1 50.6H97.7M83.1 60.2H91.6M83.1 66.4H91.6M83.1 73.3H94.8M99.5 64.5H114.1M99.5 67.5H112.7M99.5 73.3H110.8M99.5 79.2H110.8M117.2 60.2H125.8M117.2 66.4H127.2M117.2 73.3H130.5M117.2 79.2H127.2M130.0 64.5H133.7" stroke="#4cd964" stroke-width="2.3" fill="none"/></svg>
<svg class="a" style="left:570.62px;top:569.25px" width="134.3" height="115.5"><path d="M0.0 56.4H11.4M14.7 56.4H31.1M0.0 64.5H11.4M14.7 66.4H29.2M0.0 70.3H9.6M14.7 73.3H27.8M0.0 77.3H9.6M14.7 77.3H27.8M32.8 60.2H44.2M32.8 66.4H44.2M32.8 73.3H42.4M32.8 79.2H42.4M48.9 79.2H60.6M48.9 86.2H60.6M48.9 92.3H60.6M62.0 70.3H64.9M66.7 56.4H79.9M66.7 64.5H78.4M66.7 70.3H78.4M66.7 77.3H78.4M91.1 50.6H97.7M83.1 60.2H91.6M83.1 66.4H91.6M83.1 73.3H94.8M99.5 64.5H114.1M99.5 67.5H112.7M99.5 73.3H110.8M99.5 79.2H110.8M117.2 60.2H125.8M117.2 66.4H127.2M117.2 73.3H130.5M117.2 79.2H127.2M130.0 64.5H133.7" stroke="#3a9c4a" stroke-width="2.3" fill="none"/></svg>
<div class="lbl" style="left:448.08px;top:580.05px;max-width:254.9px;overflow:hidden">Mello...iano</div>
<div class="a" style="left:705.36px;top:568.45px;width:67.92px;height:117.10px;background:rgba(0,0,0,0.35);border-radius:7.8px"></div>
<div class="a" style="left:706.16px;top:569.25px;width:66.32px;height:115.50px;background:#10601f;border-radius:7px"></div>
<svg class="a" style="left:706.16px;top:569.25px" width="66.3" height="115.5"><path d="M11.2 54.8H14.6M0.0 62.2H4.4M6.3 62.2H9.7M16.1 62.2H21.4M23.9 62.2H27.8M27.8 67.3H30.7M0.0 72.1H4.4M6.3 72.1H9.7M16.1 72.1H19.5M23.9 72.1H27.8M30.7 72.1H33.6M32.7 73.6H37.5M40.4 73.6H44.3M46.8 73.6H55.6M61.4 73.6H65.3M0.0 78.5H3.4M6.3 78.5H9.7M16.1 78.5H19.5M23.9 78.5H27.8M56.5 78.5H60.4M32.2 83.5H37.5M40.4 83.5H45.8M46.8 83.5H53.6M0.0 88.2H3.4M6.3 88.2H9.7M14.6 88.2H19.5M23.9 88.2H27.8M32.2 90.6H37.5M40.4 90.6H44.3M46.8 90.6H60.4M32.2 99.6H37.5M40.4 99.6H44.3M46.8 99.6H60.4" stroke="#4cd964" stroke-width="2.3" fill="none"/></svg>
<div class="lbl" style="left:718.16px;top:580.05px;max-width:52.3px;overflow:hidden">...o</div>
<div class="a" style="left:772.88px;top:568.45px;width:57.92px;height:117.10px;background:rgba(0,0,0,0.35);border-radius:7.8px"></div>
<div class="a" style="left:773.68px;top:569.25px;width:56.32px;height:115.50px;background:#10601f;border-radius:7px"></div>
<svg class="a" style="left:773.68px;top:569.25px" width="56.3" height="115.5"><path d="M22.7 43.4H26.6M27.6 45.8H31.5M42.7 50.7H46.1M10.0 54.8H13.9M32.9 54.8H36.4M40.7 54.8H44.6M47.6 54.8H54.4M0.0 62.2H3.7M6.6 62.2H10.5M16.4 62.2H20.3M32.9 67.3H37.8M40.7 67.3H44.6M47.6 67.3H54.4M0.0 72.1H3.7M6.6 72.1H10.5M14.9 72.1H18.3M31.0 73.6H37.8M40.7 73.6H44.6M47.6 73.6H54.4M0.0 78.5H3.7M6.6 78.5H10.5M14.9 78.5H26.6M31.0 83.5H41.2M45.6 83.5H51.0M0.0 88.2H3.7M6.6 88.2H10.5M14.9 88.2H26.6" stroke="#4cd964" stroke-width="2.3" fill="none"/></svg>
<div class="lbl" style="left:785.68px;top:580.05px;max-width:42.3px;overflow:hidden">...</div>
<div class="a" style="left:840.40px;top:568.45px;width:67.92px;height:117.10px;background:rgba(0,0,0,0.35);border-radius:7.8px"></div>
<div class="a" style="left:841.20px;top:569.25px;width:66.32px;height:115.50px;background:#10601f;border-radius:7px"></div>
<svg class="a" style="left:841.20px;top:569.25px" width="66.3" height="115.5"><path d="M11.2 54.8H14.6M0.0 62.2H4.4M6.3 62.2H9.7M16.1 62.2H21.4M23.9 62.2H27.8M27.8 67.3H30.7M0.0 72.1H4.4M6.3 72.1H9.7M16.1 72.1H19.5M23.9 72.1H27.8M30.7 72.1H33.6M32.7 73.6H37.5M40.4 73.6H44.3M46.8 73.6H55.6M61.4 73.6H65.3M0.0 78.5H3.4M6.3 78.5H9.7M16.1 78.5H19.5M23.9 78.5H27.8M56.5 78.5H60.4M32.2 83.5H37.5M40.4 83.5H45.8M46.8 83.5H53.6M0.0 88.2H3.4M6.3 88.2H9.7M14.6 88.2H19.5M23.9 88.2H27.8M32.2 90.6H37.5M40.4 90.6H44.3M46.8 90.6H60.4M32.2 99.6H37.5M40.4 99.6H44.3M46.8 99.6H60.4" stroke="#4cd964" stroke-width="2.3" fill="none"/></svg>
<div class="lbl" style="left:853.20px;top:580.05px;max-width:52.3px;overflow:hidden">...o</div>
<div class="a" style="left:907.92px;top:568.45px;width:57.88px;height:117.10px;background:rgba(0,0,0,0.35);border-radius:7.8px"></div>
<div class="a" style="left:908.72px;top:569.25px;width:56.28px;height:115.50px;background:#10601f;border-radius:7px"></div>
<svg class="a" style="left:908.72px;top:569.25px" width="56.3" height="115.5"><path d="M22.7 43.4H26.6M27.6 45.8H31.5M42.7 50.7H46.1M10.0 54.8H13.9M32.9 54.8H36.4M40.7 54.8H44.6M47.6 54.8H54.4M0.0 62.2H3.7M6.6 62.2H10.5M16.4 62.2H20.3M32.9 67.3H37.8M40.7 67.3H44.6M47.6 67.3H54.4M0.0 72.1H3.7M6.6 72.1H10.5M14.9 72.1H18.3M31.0 73.6H37.8M40.7 73.6H44.6M47.6 73.6H54.4M0.0 78.5H3.7M6.6 78.5H10.5M14.9 78.5H26.6M31.0 83.5H41.2M45.6 83.5H51.0M0.0 88.2H3.7M6.6 88.2H10.5M14.9 88.2H26.6" stroke="#4cd964" stroke-width="2.3" fill="none"/></svg>
<div class="lbl" style="left:920.72px;top:580.05px;max-width:42.3px;overflow:hidden">...</div>
<div class="a" style="left:975.44px;top:568.45px;width:67.92px;height:117.10px;background:rgba(0,0,0,0.35);border-radius:7.8px"></div>
<div class="a" style="left:976.24px;top:569.25px;width:66.32px;height:115.50px;background:#10601f;border-radius:7px"></div>
<svg class="a" style="left:976.24px;top:569.25px" width="66.3" height="115.5"><path d="M11.2 54.8H14.6M0.0 62.2H4.4M6.3 62.2H9.7M16.1 62.2H21.4M23.9 62.2H27.8M27.8 67.3H30.7M0.0 72.1H4.4M6.3 72.1H9.7M16.1 72.1H19.5M23.9 72.1H27.8M30.7 72.1H33.6M32.7 73.6H37.5M40.4 73.6H44.3M46.8 73.6H55.6M61.4 73.6H65.3M0.0 78.5H3.4M6.3 78.5H9.7M16.1 78.5H19.5M23.9 78.5H27.8M56.5 78.5H60.4M32.2 83.5H37.5M40.4 83.5H45.8M46.8 83.5H53.6M0.0 88.2H3.4M6.3 88.2H9.7M14.6 88.2H19.5M23.9 88.2H27.8M32.2 90.6H37.5M40.4 90.6H44.3M46.8 90.6H60.4M32.2 99.6H37.5M40.4 99.6H44.3M46.8 99.6H60.4" stroke="#4cd964" stroke-width="2.3" fill="none"/></svg>
<div class="lbl" style="left:988.24px;top:580.05px;max-width:52.3px;overflow:hidden">...o</div>
<div class="a" style="left:1042.96px;top:568.45px;width:57.84px;height:117.10px;background:rgba(0,0,0,0.35);border-radius:7.8px"></div>
<div class="a" style="left:1043.76px;top:569.25px;width:56.24px;height:115.50px;background:#10601f;border-radius:7px"></div>
<svg class="a" style="left:1043.76px;top:569.25px" width="56.2" height="115.5"><path d="M22.7 43.4H26.6M27.6 45.8H31.5M42.7 50.7H46.1M10.0 54.8H13.9M32.9 54.8H36.4M40.7 54.8H44.6M47.6 54.8H54.4M0.0 62.2H3.7M6.6 62.2H10.5M16.4 62.2H20.3M32.9 67.3H37.8M40.7 67.3H44.6M47.6 67.3H54.4M0.0 72.1H3.7M6.6 72.1H10.5M14.9 72.1H18.3M31.0 73.6H37.8M40.7 73.6H44.6M47.6 73.6H54.4M0.0 78.5H3.7M6.6 78.5H10.5M14.9 78.5H26.6M31.0 83.5H41.2M45.6 83.5H51.0M0.0 88.2H3.7M6.6 88.2H10.5M14.9 88.2H26.6" stroke="#4cd964" stroke-width="2.3" fill="none"/></svg>
<div class="lbl" style="left:1055.76px;top:580.05px;max-width:42.2px;overflow:hidden">...</div>
<div class="a" style="left:1110.48px;top:568.45px;width:67.92px;height:117.10px;background:rgba(0,0,0,0.35);border-radius:7.8px"></div>
<div class="a" style="left:1111.28px;top:569.25px;width:66.32px;height:115.50px;background:#10601f;border-radius:7px"></div>
<svg class="a" style="left:1111.28px;top:569.25px" width="66.3" height="115.5"><path d="M11.2 54.8H14.6M0.0 62.2H4.4M6.3 62.2H9.7M16.1 62.2H21.4M23.9 62.2H27.8M27.8 67.3H30.7M0.0 72.1H4.4M6.3 72.1H9.7M16.1 72.1H19.5M23.9 72.1H27.8M30.7 72.1H33.6M32.7 73.6H37.5M40.4 73.6H44.3M46.8 73.6H55.6M61.4 73.6H65.3M0.0 78.5H3.4M6.3 78.5H9.7M16.1 78.5H19.5M23.9 78.5H27.8M56.5 78.5H60.4M32.2 83.5H37.5M40.4 83.5H45.8M46.8 83.5H53.6M0.0 88.2H3.4M6.3 88.2H9.7M14.6 88.2H19.5M23.9 88.2H27.8M32.2 90.6H37.5M40.4 90.6H44.3M46.8 90.6H60.4M32.2 99.6H37.5M40.4 99.6H44.3M46.8 99.6H60.4" stroke="#4cd964" stroke-width="2.3" fill="none"/></svg>
<div class="lbl" style="left:1123.28px;top:580.05px;max-width:52.3px;overflow:hidden">...o</div>
<div class="a" style="left:1178.00px;top:568.45px;width:57.80px;height:117.10px;background:rgba(0,0,0,0.35);border-radius:7.8px"></div>
<div class="a" style="left:1178.80px;top:569.25px;width:56.20px;height:115.50px;background:#10601f;border-radius:7px"></div>
<svg class="a" style="left:1178.80px;top:569.25px" width="56.2" height="115.5"><path d="M22.7 43.4H26.6M27.6 45.8H31.5M42.7 50.7H46.1M10.0 54.8H13.9M32.9 54.8H36.4M40.7 54.8H44.6M47.6 54.8H54.4M0.0 62.2H3.7M6.6 62.2H10.5M16.4 62.2H20.3M32.9 67.3H37.8M40.7 67.3H44.6M47.6 67.3H54.4M0.0 72.1H3.7M6.6 72.1H10.5M14.9 72.1H18.3M31.0 73.6H37.8M40.7 73.6H44.6M47.6 73.6H54.4M0.0 78.5H3.7M6.6 78.5H10.5M14.9 78.5H26.6M31.0 83.5H41.2M45.6 83.5H51.0M0.0 88.2H3.7M6.6 88.2H10.5M14.9 88.2H26.6" stroke="#4cd964" stroke-width="2.3" fill="none"/></svg>
<div class="lbl" style="left:1190.80px;top:580.05px;max-width:42.2px;overflow:hidden">...</div>
<div class="a" style="left:966.20px;top:568.45px;width:8.60px;height:117.10px;background:rgba(0,0,0,0.35);border-radius:7.8px"></div>
<div class="a" style="left:967.00px;top:569.25px;width:7.00px;height:115.50px;background:#10601f;border-radius:7px"></div>
<svg class="a" style="left:967.00px;top:569.25px" width="7.0" height="115.5"><path d="M0.0 62.0H4.0M0.0 72.0H5.0M1.0 78.0H6.0" stroke="#4cd964" stroke-width="2.3" fill="none"/></svg>
<div class="a" style="left:1245.52px;top:568.45px;width:270.48px;height:117.10px;background:rgba(0,0,0,0.35);border-radius:7.8px"></div>
<div class="a" style="left:1246.32px;top:569.25px;width:135.04px;height:115.50px;background:#10601f;border-radius:7px"></div>
<div class="a" style="left:1380.36px;top:569.25px;width:134.84px;height:115.50px;background:#10601f;border-radius:7px"></div>
<svg class="a" style="left:1246.32px;top:569.25px" width="134.5" height="115.5"><path d="M0.0 56.4H11.4M14.7 56.4H31.1M0.0 64.5H11.4M14.7 66.4H29.2M0.0 70.3H9.6M14.7 73.3H27.8M0.0 77.3H9.6M14.7 77.3H27.8M32.8 60.2H44.2M32.8 66.4H44.2M32.8 73.3H42.4M32.8 79.2H42.4M48.9 79.2H60.6M48.9 86.2H60.6M48.9 92.3H60.6M62.0 70.3H64.9M66.7 56.4H79.9M66.7 64.5H78.4M66.7 70.3H78.4M66.7 77.3H78.4M91.1 50.6H97.7M83.1 60.2H91.6M83.1 66.4H91.6M83.1 73.3H94.8M99.5 64.5H114.1M99.5 67.5H112.7M99.5 73.3H110.8M99.5 79.2H110.8M117.2 60.2H125.8M117.2 66.4H127.2M117.2 73.3H130.5M117.2 79.2H127.2M130.0 64.5H133.7" stroke="#4cd964" stroke-width="2.3" fill="none"/></svg>
<svg class="a" style="left:1380.86px;top:569.25px" width="134.3" height="115.5"><path d="M0.0 56.4H11.4M14.7 56.4H31.1M0.0 64.5H11.4M14.7 66.4H29.2M0.0 70.3H9.6M14.7 73.3H27.8M0.0 77.3H9.6M14.7 77.3H27.8M32.8 60.2H44.2M32.8 66.4H44.2M32.8 73.3H42.4M32.8 79.2H42.4M48.9 79.2H60.6M48.9 86.2H60.6M48.9 92.3H60.6M62.0 70.3H64.9M66.7 56.4H79.9M66.7 64.5H78.4M66.7 70.3H78.4M66.7 77.3H78.4M91.1 50.6H97.7M83.1 60.2H91.6M83.1 66.4H91.6M83.1 73.3H94.8M99.5 64.5H114.1M99.5 67.5H112.7M99.5 73.3H110.8M99.5 79.2H110.8M117.2 60.2H125.8M117.2 66.4H127.2M117.2 73.3H130.5M117.2 79.2H127.2M130.0 64.5H133.7" stroke="#3a9c4a" stroke-width="2.3" fill="none"/></svg>
<div class="lbl" style="left:1258.32px;top:580.05px;max-width:254.9px;overflow:hidden">Mello...iano</div>
<div class="a" style="left:1515.60px;top:568.45px;width:67.92px;height:117.10px;background:rgba(0,0,0,0.35);border-radius:7.8px"></div>
<div class="a" style="left:1516.40px;top:569.25px;width:66.32px;height:115.50px;background:#10601f;border-radius:7px"></div>
<svg class="a" style="left:1516.40px;top:569.25px" width="66.3" height="115.5"><path d="M0.0 46.1H15.3M32.8 51.6H44.4M0.0 58.6H13.1M16.4 61.4H29.5M32.8 61.4H44.4M0.0 67.3H9.8M16.4 73.9H28.4M32.8 73.9H40.9M48.8 73.9H60.6M0.0 79.4H9.8M16.4 82.6H28.4M48.8 82.6H60.6M48.8 95.1H60.6" stroke="#4cd964" stroke-width="2.3" fill="none"/></svg>
<div class="lbl" style="left:1528.40px;top:580.05px;max-width:52.3px;overflow:hidden">...o</div>
<div class="a" style="left:1583.12px;top:568.45px;width:67.92px;height:117.10px;background:rgba(0,0,0,0.35);border-radius:7.8px"></div>
<div class="a" style="left:1583.92px;top:569.25px;width:66.32px;height:115.50px;background:#10601f;border-radius:7px"></div>
<svg class="a" style="left:1583.92px;top:569.25px" width="66.3" height="115.5"><path d="M49.0 47.6H60.6M31.1 56.4H43.1M0.0 65.8H13.1M14.7 69.5H27.8M31.1 69.5H45.9M49.0 65.8H60.6M0.0 78.9H10.3M49.0 78.9H59.1M14.7 87.7H26.3M31.1 87.7H42.4M0.0 96.8H8.1M14.7 96.8H26.3" stroke="#4cd964" stroke-width="2.3" fill="none"/></svg>
<div class="lbl" style="left:1595.92px;top:580.05px;max-width:52.3px;overflow:hidden">...o</div>
<div class="a" style="left:1650.64px;top:568.45px;width:67.92px;height:117.10px;background:rgba(0,0,0,0.35);border-radius:7.8px"></div>
<div class="a" style="left:1651.44px;top:569.25px;width:66.32px;height:115.50px;background:#10601f;border-radius:7px"></div>
<svg class="a" style="left:1651.44px;top:569.25px" width="66.3" height="115.5"><path d="M0.0 46.1H15.3M32.8 51.6H44.4M0.0 58.6H13.1M16.4 61.4H29.5M32.8 61.4H44.4M0.0 67.3H9.8M16.4 73.9H28.4M32.8 73.9H40.9M48.8 73.9H60.6M0.0 79.4H9.8M16.4 82.6H28.4M48.8 82.6H60.6M48.8 95.1H60.6" stroke="#4cd964" stroke-width="2.3" fill="none"/></svg>
<div class="lbl" style="left:1663.44px;top:580.05px;max-width:52.3px;overflow:hidden">...o</div>
<div class="a" style="left:1718.16px;top:568.45px;width:67.92px;height:117.10px;background:rgba(0,0,0,0.35);border-radius:7.8px"></div>
<div class="a" style="left:1718.96px;top:569.25px;width:66.32px;height:115.50px;background:#10601f;border-radius:7px"></div>
<svg class="a" style="left:1718.96px;top:569.25px" width="66.3" height="115.5"><path d="M0.0 47.6H10.3M14.7 47.6H26.3M31.3 56.4H43.8M0.0 65.8H10.3M14.7 65.8H26.3M14.7 69.5H26.3M31.3 69.5H43.8M48.8 65.8H57.5M48.8 69.5H57.5M0.0 78.9H8.3M14.7 87.7H26.3M31.3 87.7H42.7M48.8 87.7H57.5" stroke="#4cd964" stroke-width="2.3" fill="none"/></svg>
<div class="lbl" style="left:1730.96px;top:580.05px;max-width:52.3px;overflow:hidden">...o</div>
<div class="a" style="left:1785.68px;top:568.45px;width:140.12px;height:117.10px;background:rgba(0,0,0,0.35);border-radius:7.8px"></div>
<div class="a" style="left:1786.48px;top:569.25px;width:135.04px;height:115.50px;background:#10601f;border-radius:7px"></div>
<div class="a" style="left:1920.52px;top:569.25px;width:4.48px;height:115.50px;background:#10601f;border-radius:7px"></div>
<svg class="a" style="left:1786.48px;top:569.25px" width="134.5" height="115.5"><path d="M0.0 56.4H11.4M14.7 56.4H31.1M0.0 64.5H11.4M14.7 66.4H29.2M0.0 70.3H9.6M14.7 73.3H27.8M0.0 77.3H9.6M14.7 77.3H27.8M32.8 60.2H44.2M32.8 66.4H44.2M32.8 73.3H42.4M32.8 79.2H42.4M48.9 79.2H60.6M48.9 86.2H60.6M48.9 92.3H60.6M62.0 70.3H64.9M66.7 56.4H79.9M66.7 64.5H78.4M66.7 70.3H78.4M66.7 77.3H78.4M91.1 50.6H97.7M83.1 60.2H91.6M83.1 66.4H91.6M83.1 73.3H94.8M99.5 64.5H114.1M99.5 67.5H112.7M99.5 73.3H110.8M99.5 79.2H110.8M117.2 60.2H125.8M117.2 66.4H127.2M117.2 73.3H130.5M117.2 79.2H127.2M130.0 64.5H133.7" stroke="#4cd964" stroke-width="2.3" fill="none"/></svg>
<svg class="a" style="left:1921.02px;top:569.25px" width="4.0" height="115.5"><path d="M0.0 56.4H3.5M0.0 64.5H3.5M0.0 70.3H3.5M0.0 77.3H3.5" stroke="#3a9c4a" stroke-width="2.3" fill="none"/></svg>
<div class="lbl" style="left:1798.48px;top:580.05px;max-width:124.5px;overflow:hidden">Mello...iano</div>
<div class="a" style="left:705.36px;top:696.90px;width:67.92px;height:117.10px;background:rgba(0,0,0,0.35);border-radius:7.8px"></div>
<div class="a" style="left:706.16px;top:697.70px;width:66.32px;height:115.50px;background:#10601f;border-radius:7px"></div>
<svg class="a" style="left:706.16px;top:697.70px" width="66.3" height="115.5"><path d="M11.2 54.8H14.6M0.0 62.2H4.4M6.3 62.2H9.7M16.1 62.2H21.4M23.9 62.2H27.8M27.8 67.3H30.7M0.0 72.1H4.4M6.3 72.1H9.7M16.1 72.1H19.5M23.9 72.1H27.8M30.7 72.1H33.6M32.7 73.6H37.5M40.4 73.6H44.3M46.8 73.6H55.6M61.4 73.6H65.3M0.0 78.5H3.4M6.3 78.5H9.7M16.1 78.5H19.5M23.9 78.5H27.8M56.5 78.5H60.4M32.2 83.5H37.5M40.4 83.5H45.8M46.8 83.5H53.6M0.0 88.2H3.4M6.3 88.2H9.7M14.6 88.2H19.5M23.9 88.2H27.8M32.2 90.6H37.5M40.4 90.6H44.3M46.8 90.6H60.4M32.2 99.6H37.5M40.4 99.6H44.3M46.8 99.6H60.4" stroke="#4cd964" stroke-width="2.3" fill="none"/></svg>
<div class="lbl" style="left:718.16px;top:708.50px;max-width:52.3px;overflow:hidden">...o</div>
<div class="a" style="left:772.88px;top:696.90px;width:57.92px;height:117.10px;background:rgba(0,0,0,0.35);border-radius:7.8px"></div>
<div class="a" style="left:773.68px;top:697.70px;width:56.32px;height:115.50px;background:#10601f;border-radius:7px"></div>
<svg class="a" style="left:773.68px;top:697.70px" width="56.3" height="115.5"><path d="M22.7 43.4H26.6M27.6 45.8H31.5M42.7 50.7H46.1M10.0 54.8H13.9M32.9 54.8H36.4M40.7 54.8H44.6M47.6 54.8H54.4M0.0 62.2H3.7M6.6 62.2H10.5M16.4 62.2H20.3M32.9 67.3H37.8M40.7 67.3H44.6M47.6 67.3H54.4M0.0 72.1H3.7M6.6 72.1H10.5M14.9 72.1H18.3M31.0 73.6H37.8M40.7 73.6H44.6M47.6 73.6H54.4M0.0 78.5H3.7M6.6 78.5H10.5M14.9 78.5H26.6M31.0 83.5H41.2M45.6 83.5H51.0M0.0 88.2H3.7M6.6 88.2H10.5M14.9 88.2H26.6" stroke="#4cd964" stroke-width="2.3" fill="none"/></svg>
<div class="lbl" style="left:785.68px;top:708.50px;max-width:42.3px;overflow:hidden">...</div>
<div class="a" style="left:840.40px;top:696.90px;width:67.92px;height:117.10px;background:rgba(0,0,0,0.35);border-radius:7.8px"></div>
<div class="a" style="left:841.20px;top:697.70px;width:66.32px;height:115.50px;background:#10601f;border-radius:7px"></div>
<svg class="a" style="left:841.20px;top:697.70px" width="66.3" height="115.5"><path d="M11.2 54.8H14.6M0.0 62.2H4.4M6.3 62.2H9.7M16.1 62.2H21.4M23.9 62.2H27.8M27.8 67.3H30.7M0.0 72.1H4.4M6.3 72.1H9.7M16.1 72.1H19.5M23.9 72.1H27.8M30.7 72.1H33.6M32.7 73.6H37.5M40.4 73.6H44.3M46.8 73.6H55.6M61.4 73.6H65.3M0.0 78.5H3.4M6.3 78.5H9.7M16.1 78.5H19.5M23.9 78.5H27.8M56.5 78.5H60.4M32.2 83.5H37.5M40.4 83.5H45.8M46.8 83.5H53.6M0.0 88.2H3.4M6.3 88.2H9.7M14.6 88.2H19.5M23.9 88.2H27.8M32.2 90.6H37.5M40.4 90.6H44.3M46.8 90.6H60.4M32.2 99.6H37.5M40.4 99.6H44.3M46.8 99.6H60.4" stroke="#4cd964" stroke-width="2.3" fill="none"/></svg>
<div class="lbl" style="left:853.20px;top:708.50px;max-width:52.3px;overflow:hidden">...o</div>
<div class="a" style="left:907.92px;top:696.90px;width:57.88px;height:117.10px;background:rgba(0,0,0,0.35);border-radius:7.8px"></div>
<div class="a" style="left:908.72px;top:697.70px;width:56.28px;height:115.50px;background:#10601f;border-radius:7px"></div>
<svg class="a" style="left:908.72px;top:697.70px" width="56.3" height="115.5"><path d="M22.7 43.4H26.6M27.6 45.8H31.5M42.7 50.7H46.1M10.0 54.8H13.9M32.9 54.8H36.4M40.7 54.8H44.6M47.6 54.8H54.4M0.0 62.2H3.7M6.6 62.2H10.5M16.4 62.2H20.3M32.9 67.3H37.8M40.7 67.3H44.6M47.6 67.3H54.4M0.0 72.1H3.7M6.6 72.1H10.5M14.9 72.1H18.3M31.0 73.6H37.8M40.7 73.6H44.6M47.6 73.6H54.4M0.0 78.5H3.7M6.6 78.5H10.5M14.9 78.5H26.6M31.0 83.5H41.2M45.6 83.5H51.0M0.0 88.2H3.7M6.6 88.2H10.5M14.9 88.2H26.6" stroke="#4cd964" stroke-width="2.3" fill="none"/></svg>
<div class="lbl" style="left:920.72px;top:708.50px;max-width:42.3px;overflow:hidden">...</div>
<div class="a" style="left:975.44px;top:696.90px;width:67.92px;height:117.10px;background:rgba(0,0,0,0.35);border-radius:7.8px"></div>
<div class="a" style="left:976.24px;top:697.70px;width:66.32px;height:115.50px;background:#10601f;border-radius:7px"></div>
<svg class="a" style="left:976.24px;top:697.70px" width="66.3" height="115.5"><path d="M11.2 54.8H14.6M0.0 62.2H4.4M6.3 62.2H9.7M16.1 62.2H21.4M23.9 62.2H27.8M27.8 67.3H30.7M0.0 72.1H4.4M6.3 72.1H9.7M16.1 72.1H19.5M23.9 72.1H27.8M30.7 72.1H33.6M32.7 73.6H37.5M40.4 73.6H44.3M46.8 73.6H55.6M61.4 73.6H65.3M0.0 78.5H3.4M6.3 78.5H9.7M16.1 78.5H19.5M23.9 78.5H27.8M56.5 78.5H60.4M32.2 83.5H37.5M40.4 83.5H45.8M46.8 83.5H53.6M0.0 88.2H3.4M6.3 88.2H9.7M14.6 88.2H19.5M23.9 88.2H27.8M32.2 90.6H37.5M40.4 90.6H44.3M46.8 90.6H60.4M32.2 99.6H37.5M40.4 99.6H44.3M46.8 99.6H60.4" stroke="#4cd964" stroke-width="2.3" fill="none"/></svg>
<div class="lbl" style="left:988.24px;top:708.50px;max-width:52.3px;overflow:hidden">...o</div>
<div class="a" style="left:1042.96px;top:696.90px;width:57.84px;height:117.10px;background:rgba(0,0,0,0.35);border-radius:7.8px"></div>
<div class="a" style="left:1043.76px;top:697.70px;width:56.24px;height:115.50px;background:#10601f;border-radius:7px"></div>
<svg class="a" style="left:1043.76px;top:697.70px" width="56.2" height="115.5"><path d="M22.7 43.4H26.6M27.6 45.8H31.5M42.7 50.7H46.1M10.0 54.8H13.9M32.9 54.8H36.4M40.7 54.8H44.6M47.6 54.8H54.4M0.0 62.2H3.7M6.6 62.2H10.5M16.4 62.2H20.3M32.9 67.3H37.8M40.7 67.3H44.6M47.6 67.3H54.4M0.0 72.1H3.7M6.6 72.1H10.5M14.9 72.1H18.3M31.0 73.6H37.8M40.7 73.6H44.6M47.6 73.6H54.4M0.0 78.5H3.7M6.6 78.5H10.5M14.9 78.5H26.6M31.0 83.5H41.2M45.6 83.5H51.0M0.0 88.2H3.7M6.6 88.2H10.5M14.9 88.2H26.6" stroke="#4cd964" stroke-width="2.3" fill="none"/></svg>
<div class="lbl" style="left:1055.76px;top:708.50px;max-width:42.2px;overflow:hidden">...</div>
<div class="a" style="left:1110.48px;top:696.90px;width:67.92px;height:117.10px;background:rgba(0,0,0,0.35);border-radius:7.8px"></div>
<div class="a" style="left:1111.28px;top:697.70px;width:66.32px;height:115.50px;background:#10601f;border-radius:7px"></div>
<svg class="a" style="left:1111.28px;top:697.70px" width="66.3" height="115.5"><path d="M11.2 54.8H14.6M0.0 62.2H4.4M6.3 62.2H9.7M16.1 62.2H21.4M23.9 62.2H27.8M27.8 67.3H30.7M0.0 72.1H4.4M6.3 72.1H9.7M16.1 72.1H19.5M23.9 72.1H27.8M30.7 72.1H33.6M32.7 73.6H37.5M40.4 73.6H44.3M46.8 73.6H55.6M61.4 73.6H65.3M0.0 78.5H3.4M6.3 78.5H9.7M16.1 78.5H19.5M23.9 78.5H27.8M56.5 78.5H60.4M32.2 83.5H37.5M40.4 83.5H45.8M46.8 83.5H53.6M0.0 88.2H3.4M6.3 88.2H9.7M14.6 88.2H19.5M23.9 88.2H27.8M32.2 90.6H37.5M40.4 90.6H44.3M46.8 90.6H60.4M32.2 99.6H37.5M40.4 99.6H44.3M46.8 99.6H60.4" stroke="#4cd964" stroke-width="2.3" fill="none"/></svg>
<div class="lbl" style="left:1123.28px;top:708.50px;max-width:52.3px;overflow:hidden">...o</div>
<div class="a" style="left:1178.00px;top:696.90px;width:57.80px;height:117.10px;background:rgba(0,0,0,0.35);border-radius:7.8px"></div>
<div class="a" style="left:1178.80px;top:697.70px;width:56.20px;height:115.50px;background:#10601f;border-radius:7px"></div>
<svg class="a" style="left:1178.80px;top:697.70px" width="56.2" height="115.5"><path d="M22.7 43.4H26.6M27.6 45.8H31.5M42.7 50.7H46.1M10.0 54.8H13.9M32.9 54.8H36.4M40.7 54.8H44.6M47.6 54.8H54.4M0.0 62.2H3.7M6.6 62.2H10.5M16.4 62.2H20.3M32.9 67.3H37.8M40.7 67.3H44.6M47.6 67.3H54.4M0.0 72.1H3.7M6.6 72.1H10.5M14.9 72.1H18.3M31.0 73.6H37.8M40.7 73.6H44.6M47.6 73.6H54.4M0.0 78.5H3.7M6.6 78.5H10.5M14.9 78.5H26.6M31.0 83.5H41.2M45.6 83.5H51.0M0.0 88.2H3.7M6.6 88.2H10.5M14.9 88.2H26.6" stroke="#4cd964" stroke-width="2.3" fill="none"/></svg>
<div class="lbl" style="left:1190.80px;top:708.50px;max-width:42.2px;overflow:hidden">...</div>
<div class="a" style="left:1245.52px;top:696.90px;width:270.48px;height:117.10px;background:rgba(0,0,0,0.35);border-radius:7.8px"></div>
<div class="a" style="left:1246.32px;top:697.70px;width:135.04px;height:115.50px;background:#10601f;border-radius:7px"></div>
<div class="a" style="left:1380.36px;top:697.70px;width:134.84px;height:115.50px;background:#10601f;border-radius:7px"></div>
<svg class="a" style="left:1246.32px;top:697.70px" width="134.5" height="115.5"><path d="M0.0 56.4H11.4M14.7 56.4H31.1M0.0 64.5H11.4M14.7 66.4H29.2M0.0 70.3H9.6M14.7 73.3H27.8M0.0 77.3H9.6M14.7 77.3H27.8M32.8 60.2H44.2M32.8 66.4H44.2M32.8 73.3H42.4M32.8 79.2H42.4M48.9 79.2H60.6M48.9 86.2H60.6M48.9 92.3H60.6M62.0 70.3H64.9M66.7 56.4H79.9M66.7 64.5H78.4M66.7 70.3H78.4M66.7 77.3H78.4M91.1 50.6H97.7M83.1 60.2H91.6M83.1 66.4H91.6M83.1 73.3H94.8M99.5 64.5H114.1M99.5 67.5H112.7M99.5 73.3H110.8M99.5 79.2H110.8M117.2 60.2H125.8M117.2 66.4H127.2M117.2 73.3H130.5M117.2 79.2H127.2M130.0 64.5H133.7" stroke="#4cd964" stroke-width="2.3" fill="none"/></svg>
<svg class="a" style="left:1380.86px;top:697.70px" width="134.3" height="115.5"><path d="M0.0 56.4H11.4M14.7 56.4H31.1M0.0 64.5H11.4M14.7 66.4H29.2M0.0 70.3H9.6M14.7 73.3H27.8M0.0 77.3H9.6M14.7 77.3H27.8M32.8 60.2H44.2M32.8 66.4H44.2M32.8 73.3H42.4M32.8 79.2H42.4M48.9 79.2H60.6M48.9 86.2H60.6M48.9 92.3H60.6M62.0 70.3H64.9M66.7 56.4H79.9M66.7 64.5H78.4M66.7 70.3H78.4M66.7 77.3H78.4M91.1 50.6H97.7M83.1 60.2H91.6M83.1 66.4H91.6M83.1 73.3H94.8M99.5 64.5H114.1M99.5 67.5H112.7M99.5 73.3H110.8M99.5 79.2H110.8M117.2 60.2H125.8M117.2 66.4H127.2M117.2 73.3H130.5M117.2 79.2H127.2M130.0 64.5H133.7" stroke="#3a9c4a" stroke-width="2.3" fill="none"/></svg>
<div class="lbl" style="left:1258.32px;top:708.50px;max-width:254.9px;overflow:hidden">Mello...iano</div>
<div class="a" style="left:1515.60px;top:696.90px;width:67.92px;height:117.10px;background:rgba(0,0,0,0.35);border-radius:7.8px"></div>
<div class="a" style="left:1516.40px;top:697.70px;width:66.32px;height:115.50px;background:#10601f;border-radius:7px"></div>
<svg class="a" style="left:1516.40px;top:697.70px" width="66.3" height="115.5"><path d="M0.0 46.1H15.3M32.8 51.6H44.4M0.0 58.6H13.1M16.4 61.4H29.5M32.8 61.4H44.4M0.0 67.3H9.8M16.4 73.9H28.4M32.8 73.9H40.9M48.8 73.9H60.6M0.0 79.4H9.8M16.4 82.6H28.4M48.8 82.6H60.6M48.8 95.1H60.6" stroke="#4cd964" stroke-width="2.3" fill="none"/></svg>
<div class="lbl" style="left:1528.40px;top:708.50px;max-width:52.3px;overflow:hidden">...o</div>
<div class="a" style="left:1583.12px;top:696.90px;width:67.92px;height:117.10px;background:rgba(0,0,0,0.35);border-radius:7.8px"></div>
<div class="a" style="left:1583.92px;top:697.70px;width:66.32px;height:115.50px;background:#10601f;border-radius:7px"></div>
<svg class="a" style="left:1583.92px;top:697.70px" width="66.3" height="115.5"><path d="M49.0 47.6H60.6M31.1 56.4H43.1M0.0 65.8H13.1M14.7 69.5H27.8M31.1 69.5H45.9M49.0 65.8H60.6M0.0 78.9H10.3M49.0 78.9H59.1M14.7 87.7H26.3M31.1 87.7H42.4M0.0 96.8H8.1M14.7 96.8H26.3" stroke="#4cd964" stroke-width="2.3" fill="none"/></svg>
<div class="lbl" style="left:1595.92px;top:708.50px;max-width:52.3px;overflow:hidden">...o</div>
<div class="a" style="left:435.28px;top:825.35px;width:135.44px;height:117.10px;background:rgba(0,0,0,0.35);border-radius:7.8px"></div>
<div class="a" style="left:436.08px;top:826.15px;width:133.84px;height:115.50px;background:#10601f;border-radius:7px"></div>
<svg class="a" style="left:436.08px;top:826.15px" width="133.8" height="115.5"><path d="M125.1 45.0H130.7M40.3 50.6H44.0M120.4 50.6H124.2M45.5 54.8H48.7M53.9 54.8H56.7M117.2 54.8H120.9M6.6 57.0H9.8M35.9 57.0H39.4M56.7 57.0H60.4M96.1 57.0H99.8M61.9 59.5H65.6M3.3 61.9H6.6M11.2 61.9H15.0M24.4 61.9H27.6M67.0 61.9H72.6M75.4 61.9H81.5M99.4 61.9H103.1M104.5 61.9H110.6M112.5 61.9H115.7M19.2 66.8H23.0M27.6 66.8H30.9M34.2 66.8H37.5M39.4 66.8H45.5M47.3 66.8H53.4M55.3 66.8H58.6M82.9 66.8H86.2M87.6 66.8H94.7M0.0 73.4H3.3M5.2 73.4H8.4M10.3 73.4H16.4M18.3 73.4H24.4M26.2 73.4H32.8M62.3 73.4H65.1M70.3 73.4H74.5M76.9 73.4H79.7M81.5 73.4H87.6M90.0 73.4H96.1M97.9 73.4H100.7M103.1 73.4H108.7M111.1 73.4H117.2M119.0 73.4H121.8M124.2 73.4H130.3M32.8 78.3H45.9M49.2 78.3H65.1M0.0 85.3H11.7M15.0 85.3H28.1M68.4 90.4H78.3M82.9 90.4H99.3M104.0 90.4H113.9M117.2 90.4H130.3" stroke="#4cd964" stroke-width="2.3" fill="none"/></svg>
<div class="lbl" style="left:448.08px;top:836.95px;max-width:119.8px;overflow:hidden">Dark...iano</div>
<div class="a" style="left:570.32px;top:825.35px;width:135.44px;height:117.10px;background:rgba(0,0,0,0.35);border-radius:7.8px"></div>
<div class="a" style="left:571.12px;top:826.15px;width:133.84px;height:115.50px;background:#10601f;border-radius:7px"></div>
<svg class="a" style="left:571.12px;top:826.15px" width="133.8" height="115.5"><path d="M125.1 45.0H130.7M40.3 50.6H44.0M120.4 50.6H124.2M45.5 54.8H48.7M53.9 54.8H56.7M117.2 54.8H120.9M6.6 57.0H9.8M35.9 57.0H39.4M56.7 57.0H60.4M96.1 57.0H99.8M61.9 59.5H65.6M3.3 61.9H6.6M11.2 61.9H15.0M24.4 61.9H27.6M67.0 61.9H72.6M75.4 61.9H81.5M99.4 61.9H103.1M104.5 61.9H110.6M112.5 61.9H115.7M19.2 66.8H23.0M27.6 66.8H30.9M34.2 66.8H37.5M39.4 66.8H45.5M47.3 66.8H53.4M55.3 66.8H58.6M82.9 66.8H86.2M87.6 66.8H94.7M0.0 73.4H3.3M5.2 73.4H8.4M10.3 73.4H16.4M18.3 73.4H24.4M26.2 73.4H32.8M62.3 73.4H65.1M70.3 73.4H74.5M76.9 73.4H79.7M81.5 73.4H87.6M90.0 73.4H96.1M97.9 73.4H100.7M103.1 73.4H108.7M111.1 73.4H117.2M119.0 73.4H121.8M124.2 73.4H130.3M32.8 78.3H45.9M49.2 78.3H65.1M0.0 85.3H11.7M15.0 85.3H28.1M68.4 90.4H78.3M82.9 90.4H99.3M104.0 90.4H113.9M117.2 90.4H130.3" stroke="#4cd964" stroke-width="2.3" fill="none"/></svg>
<div class="lbl" style="left:583.12px;top:836.95px;max-width:119.8px;overflow:hidden">Dark...iano</div>
<div class="a" style="left:1110.48px;top:825.35px;width:67.92px;height:117.10px;background:rgba(0,0,0,0.35);border-radius:7.8px"></div>
<div class="a" style="left:1111.28px;top:826.15px;width:66.32px;height:115.50px;background:#10601f;border-radius:7px"></div>
<svg class="a" style="left:1111.28px;top:826.15px" width="66.3" height="115.5"><path d="M0.0 55.3H12.0M12.0 50.3H21.3M5.3 59.3H10.3M8.7 71.0H13.7M32.0 65.3H37.0M45.3 65.3H50.3M50.3 71.0H55.3M33.7 77.7H38.7M38.7 86.0H45.3" stroke="#4cd964" stroke-width="2.3" fill="none"/></svg>
<div class="lbl" style="left:1123.28px;top:836.95px;max-width:52.3px;overflow:hidden">D...o</div>
<div class="a" style="left:1178.00px;top:825.35px;width:67.92px;height:117.10px;background:rgba(0,0,0,0.35);border-radius:7.8px"></div>
<div class="a" style="left:1178.80px;top:826.15px;width:66.32px;height:115.50px;background:#10601f;border-radius:7px"></div>
<svg class="a" style="left:1178.80px;top:826.15px" width="66.3" height="115.5"><path d="M14.0 59.3H17.3M0.0 68.3H7.3M4.0 74.3H14.0M14.0 68.3H24.0M4.0 79.3H10.7M10.7 90.3H17.3M29.0 90.3H34.0M34.0 82.7H39.0M40.7 68.3H45.7M50.7 82.7H57.3M57.3 94.3H60.7M60.7 94.3H65.7" stroke="#4cd964" stroke-width="2.3" fill="none"/></svg>
<div class="lbl" style="left:1190.80px;top:836.95px;max-width:52.3px;overflow:hidden">D...o</div>
<div class="a" style="left:1650.64px;top:825.35px;width:67.92px;height:117.10px;background:rgba(0,0,0,0.35);border-radius:7.8px"></div>
<div class="a" style="left:1651.44px;top:826.15px;width:66.32px;height:115.50px;background:#10601f;border-radius:7px"></div>
<svg class="a" style="left:1651.44px;top:826.15px" width="66.3" height="115.5"><path d="M24.0 65.5H47.0M18.8 76.8H24.0M18.8 79.5H24.0M20.5 85.7H24.0M52.4 55.6H56.0M52.4 65.5H56.0M56.0 70.8H65.8M56.0 78.6H59.5" stroke="#4cd964" stroke-width="2.3" fill="none"/></svg>
<div class="lbl" style="left:1663.44px;top:836.95px;max-width:52.3px;overflow:hidden">D...o</div>
<div class="a" style="left:1719.20px;top:825.35px;width:32.20px;height:117.10px;background:rgba(0,0,0,0.35);border-radius:7.8px"></div>
<div class="a" style="left:1720.00px;top:826.15px;width:30.60px;height:115.50px;background:#10601f;border-radius:7px"></div>
<svg class="a" style="left:1720.00px;top:826.15px" width="30.6" height="115.5"><path d="M0.0 65.0H3.0M12.0 60.0H16.0M20.0 72.0H24.0M4.0 80.0H8.0M24.0 85.0H27.0" stroke="#4cd964" stroke-width="2.3" fill="none"/></svg>
<div class="a" style="left:1751.20px;top:825.35px;width:17.60px;height:117.10px;background:rgba(0,0,0,0.35);border-radius:7.8px"></div>
<div class="a" style="left:1752.00px;top:826.15px;width:16.00px;height:115.50px;background:#10601f;border-radius:7px"></div>
<svg class="a" style="left:1752.00px;top:826.15px" width="16.0" height="115.5"><path d="M2.0 60.0H6.0M8.0 75.0H12.0M10.0 90.0H13.0" stroke="#4cd964" stroke-width="2.3" fill="none"/></svg>
<div class="a" style="left:1769.20px;top:825.35px;width:16.60px;height:117.10px;background:rgba(0,0,0,0.35);border-radius:7.8px"></div>
<div class="a" style="left:1770.00px;top:826.15px;width:15.00px;height:115.50px;background:#10601f;border-radius:7px"></div>
<svg class="a" style="left:1770.00px;top:826.15px" width="15.0" height="115.5"><path d="M2.0 60.0H8.0" stroke="#4cd964" stroke-width="2.3" fill="none"/></svg>
<div class="a" style="left:1785.68px;top:825.35px;width:140.12px;height:117.10px;background:rgba(0,0,0,0.35);border-radius:7.8px"></div>
<div class="a" style="left:1786.48px;top:826.15px;width:138.52px;height:115.50px;background:#10601f;border-radius:7px"></div>
<svg class="a" style="left:1786.48px;top:826.15px" width="138.5" height="115.5"><path d="M125.1 45.0H130.7M40.3 50.6H44.0M120.4 50.6H124.2M45.5 54.8H48.7M53.9 54.8H56.7M117.2 54.8H120.9M6.6 57.0H9.8M35.9 57.0H39.4M56.7 57.0H60.4M96.1 57.0H99.8M61.9 59.5H65.6M3.3 61.9H6.6M11.2 61.9H15.0M24.4 61.9H27.6M67.0 61.9H72.6M75.4 61.9H81.5M99.4 61.9H103.1M104.5 61.9H110.6M112.5 61.9H115.7M19.2 66.8H23.0M27.6 66.8H30.9M34.2 66.8H37.5M39.4 66.8H45.5M47.3 66.8H53.4M55.3 66.8H58.6M82.9 66.8H86.2M87.6 66.8H94.7M0.0 73.4H3.3M5.2 73.4H8.4M10.3 73.4H16.4M18.3 73.4H24.4M26.2 73.4H32.8M62.3 73.4H65.1M70.3 73.4H74.5M76.9 73.4H79.7M81.5 73.4H87.6M90.0 73.4H96.1M97.9 73.4H100.7M103.1 73.4H108.7M111.1 73.4H117.2M119.0 73.4H121.8M124.2 73.4H130.3M32.8 78.3H45.9M49.2 78.3H65.1M0.0 85.3H11.7M15.0 85.3H28.1M68.4 90.4H78.3M82.9 90.4H99.3M104.0 90.4H113.9M117.2 90.4H130.3" stroke="#4cd964" stroke-width="2.3" fill="none"/></svg>
<div class="lbl" style="left:1798.48px;top:836.95px;max-width:124.5px;overflow:hidden">Dark...iano</div>
<div class="a" style="left:367.76px;top:953.80px;width:67.92px;height:117.10px;background:rgba(0,0,0,0.35);border-radius:7.8px"></div>
<div class="a" style="left:368.56px;top:954.60px;width:66.32px;height:115.50px;background:#10601f;border-radius:7px"></div>
<svg class="a" style="left:368.56px;top:954.60px" width="66.3" height="115.5"><path d="M0.0 43.7H6.5M15.3 52.5H21.9M32.0 62.1H39.4M48.1 75.2H54.7M61.2 84.9H65.6" stroke="#4cd964" stroke-width="2.3" fill="none"/></svg>
<div class="lbl" style="left:380.56px;top:965.40px;max-width:52.3px;overflow:hidden">H...s</div>
<div class="a" style="left:570.32px;top:953.80px;width:135.44px;height:117.10px;background:rgba(0,0,0,0.35);border-radius:7.8px"></div>
<div class="a" style="left:571.12px;top:954.60px;width:133.84px;height:115.50px;background:#10601f;border-radius:7px"></div>
<svg class="a" style="left:571.12px;top:954.60px" width="133.8" height="115.5"><path d="M0.0 84.0H26.2M26.2 89.2H30.6M31.5 84.0H45.9M48.1 67.8H53.4M56.9 62.1H63.4M66.1 59.0H78.3M82.0 62.1H89.4M91.0 59.0H97.2M98.4 52.5H111.5M116.6 46.8H126.7" stroke="#4cd964" stroke-width="2.3" fill="none"/></svg>
<div class="lbl" style="left:583.12px;top:965.40px;max-width:119.8px;overflow:hidden">Holly...rings</div>
<div class="a" style="left:975.44px;top:953.80px;width:135.44px;height:117.10px;background:rgba(0,0,0,0.35);border-radius:7.8px"></div>
<div class="a" style="left:976.24px;top:954.60px;width:133.84px;height:115.50px;background:#10601f;border-radius:7px"></div>
<svg class="a" style="left:976.24px;top:954.60px" width="133.8" height="115.5"><path d="M0.0 75.8H13.6M15.0 80.6H29.6M32.5 87.9H45.6M49.0 91.9H58.8M66.8 48.1H71.9M66.8 75.8H78.5M82.8 53.2H91.6M82.8 80.6H93.0M99.6 59.5H109.8M99.6 87.9H109.8M117.1 64.5H123.7M117.1 91.9H123.7" stroke="#4cd964" stroke-width="2.3" fill="none"/></svg>
<div class="lbl" style="left:988.24px;top:965.40px;max-width:119.8px;overflow:hidden">Holly...rings</div>
<div class="a" style="left:435.28px;top:1082.25px;width:270.48px;height:117.10px;background:rgba(0,0,0,0.35);border-radius:7.8px"></div>
<div class="a" style="left:436.08px;top:1083.05px;width:135.04px;height:115.50px;background:#10601f;border-radius:7px"></div>
<div class="a" style="left:570.12px;top:1083.05px;width:134.84px;height:115.50px;background:#10601f;border-radius:7px"></div>
<svg class="a" style="left:436.08px;top:1083.05px" width="134.5" height="115.5"><path d="M32.5 84.5H37.5M100.2 84.5H105.2" stroke="#4cd964" stroke-width="2.3" fill="none"/></svg>
<svg class="a" style="left:570.62px;top:1083.05px" width="134.3" height="115.5"><path d="M32.5 84.5H37.5M100.2 84.5H105.2" stroke="#3a9c4a" stroke-width="2.3" fill="none"/></svg>
<div class="lbl" style="left:448.08px;top:1093.85px;max-width:254.9px;overflow:hidden">Studio Cuts</div>
<div class="a" style="left:840.40px;top:1082.25px;width:405.52px;height:117.10px;background:rgba(0,0,0,0.35);border-radius:7.8px"></div>
<div class="a" style="left:841.20px;top:1083.05px;width:135.04px;height:115.50px;background:#10601f;border-radius:7px"></div>
<div class="a" style="left:975.24px;top:1083.05px;width:136.04px;height:115.50px;background:#10601f;border-radius:7px"></div>
<div class="a" style="left:1110.28px;top:1083.05px;width:134.84px;height:115.50px;background:#10601f;border-radius:7px"></div>
<svg class="a" style="left:841.20px;top:1083.05px" width="134.5" height="115.5"><path d="M32.5 84.5H37.5M100.2 84.5H105.2" stroke="#4cd964" stroke-width="2.3" fill="none"/></svg>
<svg class="a" style="left:975.74px;top:1083.05px" width="135.0" height="115.5"><path d="M32.5 84.5H37.5M100.2 84.5H105.2" stroke="#3a9c4a" stroke-width="2.3" fill="none"/></svg>
<svg class="a" style="left:1110.78px;top:1083.05px" width="134.3" height="115.5"><path d="M32.5 84.5H37.5M100.2 84.5H105.2" stroke="#3a9c4a" stroke-width="2.3" fill="none"/></svg>
<div class="lbl" style="left:853.20px;top:1093.85px;max-width:389.9px;overflow:hidden">Studio Cuts</div>
<div class="a" style="left:1785.68px;top:1082.25px;width:140.12px;height:117.10px;background:rgba(0,0,0,0.35);border-radius:7.8px"></div>
<div class="a" style="left:1786.48px;top:1083.05px;width:135.04px;height:115.50px;background:#10601f;border-radius:7px"></div>
<div class="a" style="left:1920.52px;top:1083.05px;width:4.48px;height:115.50px;background:#10601f;border-radius:7px"></div>
<svg class="a" style="left:1786.48px;top:1083.05px" width="134.5" height="115.5"><path d="M32.5 84.5H37.5M100.2 84.5H105.2" stroke="#4cd964" stroke-width="2.3" fill="none"/></svg>
<svg class="a" style="left:1921.02px;top:1083.05px" width="4.0" height="115.5"><path d="" stroke="#3a9c4a" stroke-width="2.3" fill="none"/></svg>
<div class="lbl" style="left:1798.48px;top:1093.85px;max-width:124.5px;overflow:hidden">Studio Cuts</div>
<div class="a" style="left:958.20px;top:1210.70px;width:17.10px;height:117.10px;background:rgba(0,0,0,0.35);border-radius:7.8px"></div>
<div class="a" style="left:959.00px;top:1211.50px;width:15.50px;height:115.50px;background:#10601f;border-radius:7px"></div>
<svg class="a" style="left:959.00px;top:1211.50px" width="15.5" height="115.5"><path d="M10.6 84.7H13.8" stroke="#4cd964" stroke-width="2.3" fill="none"/></svg>
<div class="a" style="left:975.44px;top:1210.70px;width:135.44px;height:117.10px;background:rgba(0,0,0,0.35);border-radius:7.8px"></div>
<div class="a" style="left:976.24px;top:1211.50px;width:133.84px;height:115.50px;background:#10601f;border-radius:7px"></div>
<svg class="a" style="left:976.24px;top:1211.50px" width="133.8" height="115.5"><path d="M0.0 97.2H14.9M17.6 97.2H31.1M33.9 97.2H47.6M52.0 97.2H58.9M68.9 97.2H83.3M85.1 97.2H99.5M102.6 97.2H115.8M118.9 97.2H127.4M61.4 43.2H65.0M128.9 43.2H132.6M131.5 79.1H133.0" stroke="#4cd964" stroke-width="2.3" fill="none"/></svg>
<div class="lbl" style="left:988.24px;top:1222.30px;max-width:119.8px;overflow:hidden">Dust...ories</div>
<div class="a" style="left:1515.60px;top:1210.70px;width:135.44px;height:117.10px;background:rgba(0,0,0,0.35);border-radius:7.8px"></div>
<div class="a" style="left:1516.40px;top:1211.50px;width:133.84px;height:115.50px;background:#10601f;border-radius:7px"></div>
<svg class="a" style="left:1516.40px;top:1211.50px" width="133.8" height="115.5"><path d="M0.0 94.5H4.0M7.0 94.5H10.0M14.0 94.5H22.0M25.0 94.5H28.0M30.0 94.5H33.0M37.0 94.5H47.0M50.0 94.5H53.0M56.0 94.5H66.0M69.0 94.5H75.0M78.0 94.5H81.0M84.0 94.5H88.0M90.0 94.5H96.0M99.0 94.5H103.0M106.0 94.5H112.0M115.0 94.5H121.0M123.0 94.5H132.8" stroke="#4cd964" stroke-width="2.3" fill="none"/></svg>
<div class="lbl" style="left:1528.40px;top:1222.30px;max-width:119.8px;overflow:hidden">Dust...ories</div>
<div class="a" style="left:1650.64px;top:1210.70px;width:135.44px;height:117.10px;background:rgba(0,0,0,0.35);border-radius:7.8px"></div>
<div class="a" style="left:1651.44px;top:1211.50px;width:67.52px;height:115.50px;background:#10601f;border-radius:7px"></div>
<div class="a" style="left:1717.96px;top:1211.50px;width:67.32px;height:115.50px;background:#10601f;border-radius:7px"></div>
<svg class="a" style="left:1651.44px;top:1211.50px" width="67.0" height="115.5"><path d="M0.0 94.5H10.0M13.0 94.5H19.0M21.0 94.5H29.0M32.0 94.5H35.0M38.0 94.5H41.0M44.0 94.5H52.0M55.0 94.5H63.0" stroke="#4cd964" stroke-width="2.3" fill="none"/></svg>
<svg class="a" style="left:1718.46px;top:1211.50px" width="66.8" height="115.5"><path d="M0.0 94.5H10.0M13.0 94.5H19.0M21.0 94.5H29.0M32.0 94.5H35.0M38.0 94.5H41.0M44.0 94.5H52.0M55.0 94.5H63.0" stroke="#3a9c4a" stroke-width="2.3" fill="none"/></svg>
<div class="lbl" style="left:1663.44px;top:1222.30px;max-width:119.8px;overflow:hidden">D...s</div>
<div class="a" style="left:164.6px;top:177px;width:1.6px;height:1157px;background:#101012"></div>
<svg class="a" style="left:35px;top:198.00px" width="90" height="92"><polygon points="13.1,68.9 24.8,65.2 25.5,68.5 14,72" fill="#343436" /><polygon points="50.3,85.5 60.7,80.2 61.5,83.2 51,88" fill="#343436" /><polygon points="13.8,12.4 35.9,7.6 83.8,17.6 62,22.8" fill="#f0f0f2" /><polygon points="62,22.8 83.8,17.6 82.8,73.1 62,80" fill="#e2e2e4" /><polygon points="13.1,29 62,38 62,80 16.5,62" fill="#c9c9cd" /><polygon points="5.5,19.3 13.8,15.8 62,24.5 62,33 6.2,22.5" fill="#e8e8ea" /><polygon points="6.2,22.5 62,33 62,40 6.2,26.2" fill="#d3d3d6" /><polygon points="25.5,20 54.5,25.8 54,29.5 25,24" fill="#5a5a5c" /></svg>
<svg class="a" style="left:30px;top:328.00px" width="104" height="90"><polygon points="5.1,71.5 97.8,71.5 98.3,82.5 4.6,82.5" fill="#727274" /><polygon points="4.6,80.5 98.3,80.5 98,83.5 5,83.5" fill="#4a4a4c" /><polygon points="8.1,6.7 94.1,6.7 95.8,71.5 7.1,71.5" fill="#a9a9ab" /><polygon points="10,8 92.5,8 93.8,70 9,70" fill="#e4e4e6" /><rect x="20.6" y="13.8" width="33.4" height="16.9" fill="#4b4b4d"/><rect x="22.2" y="16.6" width="30" height="12.6" fill="#141416"/><rect x="27" y="18.9" width="19.9" height="7.8" fill="#2d86f2"/><rect x="56.0" y="9.1" width="6.3" height="4.4" fill="#ababad"/><rect x="64.3" y="9.1" width="6.3" height="4.4" fill="#ababad"/><rect x="72.6" y="9.1" width="6.3" height="4.4" fill="#ababad"/><rect x="80.9" y="9.1" width="6.3" height="4.4" fill="#ababad"/><rect x="55.9" y="18.4" width="3.6" height="2.4" rx="0.8" fill="#5a7aaa"/><rect x="60.4" y="18.4" width="3.6" height="2.4" rx="0.8" fill="#5a7aaa"/><rect x="64.9" y="18.4" width="3.6" height="2.4" rx="0.8" fill="#5a7aaa"/><rect x="55.9" y="21.8" width="3.6" height="2.4" rx="0.8" fill="#5a7aaa"/><rect x="60.4" y="21.8" width="3.6" height="2.4" rx="0.8" fill="#5a7aaa"/><rect x="64.9" y="21.8" width="3.6" height="2.4" rx="0.8" fill="#5a7aaa"/><rect x="55.9" y="25.2" width="3.6" height="2.4" rx="0.8" fill="#5a7aaa"/><rect x="60.4" y="25.2" width="3.6" height="2.4" rx="0.8" fill="#5a7aaa"/><rect x="64.9" y="25.2" width="3.6" height="2.4" rx="0.8" fill="#5a7aaa"/><rect x="55.9" y="28.6" width="3.6" height="2.4" rx="0.8" fill="#5a7aaa"/><rect x="60.4" y="28.6" width="3.6" height="2.4" rx="0.8" fill="#5a7aaa"/><rect x="64.9" y="28.6" width="3.6" height="2.4" rx="0.8" fill="#5a7aaa"/><ellipse cx="76.0" cy="19.4" rx="2" ry="1.5" fill="#f6f6f6" stroke="#8a8a8c" stroke-width="0.5"/><ellipse cx="80.7" cy="19.4" rx="2" ry="1.5" fill="#f6f6f6" stroke="#8a8a8c" stroke-width="0.5"/><ellipse cx="85.4" cy="19.4" rx="2" ry="1.5" fill="#f6f6f6" stroke="#8a8a8c" stroke-width="0.5"/><ellipse cx="76.0" cy="23.0" rx="2" ry="1.5" fill="#f6f6f6" stroke="#8a8a8c" stroke-width="0.5"/><ellipse cx="80.7" cy="23.0" rx="2" ry="1.5" fill="#f6f6f6" stroke="#8a8a8c" stroke-width="0.5"/><ellipse cx="85.4" cy="23.0" rx="2" ry="1.5" fill="#f6f6f6" stroke="#8a8a8c" stroke-width="0.5"/><ellipse cx="76.0" cy="26.6" rx="2" ry="1.5" fill="#f6f6f6" stroke="#8a8a8c" stroke-width="0.5"/><ellipse cx="80.7" cy="26.6" rx="2" ry="1.5" fill="#f6f6f6" stroke="#8a8a8c" stroke-width="0.5"/><ellipse cx="85.4" cy="26.6" rx="2" ry="1.5" fill="#f6f6f6" stroke="#8a8a8c" stroke-width="0.5"/><ellipse cx="76.0" cy="30.2" rx="2" ry="1.5" fill="#f6f6f6" stroke="#8a8a8c" stroke-width="0.5"/><ellipse cx="80.7" cy="30.2" rx="2" ry="1.5" fill="#f6f6f6" stroke="#8a8a8c" stroke-width="0.5"/><ellipse cx="85.4" cy="30.2" rx="2" ry="1.5" fill="#f6f6f6" stroke="#8a8a8c" stroke-width="0.5"/><ellipse cx="76.0" cy="33.8" rx="2" ry="1.5" fill="#f6f6f6" stroke="#8a8a8c" stroke-width="0.5"/><ellipse cx="80.7" cy="33.8" rx="2" ry="1.5" fill="#f6f6f6" stroke="#8a8a8c" stroke-width="0.5"/><ellipse cx="85.4" cy="33.8" rx="2" ry="1.5" fill="#f6f6f6" stroke="#8a8a8c" stroke-width="0.5"/><ellipse cx="26.5" cy="33.2" rx="2.4" ry="1.4" fill="#f2f2f2" stroke="#8a8a8c" stroke-width="0.5"/><ellipse cx="33.5" cy="33.2" rx="2.4" ry="1.4" fill="#f2f2f2" stroke="#8a8a8c" stroke-width="0.5"/><ellipse cx="40.5" cy="33.2" rx="2.4" ry="1.4" fill="#f2f2f2" stroke="#8a8a8c" stroke-width="0.5"/><ellipse cx="47.5" cy="33.2" rx="2.4" ry="1.4" fill="#f2f2f2" stroke="#8a8a8c" stroke-width="0.5"/><rect x="22.3" y="37.1" width="28.6" height="30.7" fill="#4a4a4c"/><rect x="23.30" y="38.10" width="6" height="6.5" fill="#8e8e90"/><rect x="30.35" y="38.10" width="6" height="6.5" fill="#8e8e90"/><rect x="37.40" y="38.10" width="6" height="6.5" fill="#8e8e90"/><rect x="44.45" y="38.10" width="6" height="6.5" fill="#8e8e90"/><rect x="23.30" y="45.60" width="6" height="6.5" fill="#8e8e90"/><rect x="30.35" y="45.60" width="6" height="6.5" fill="#8e8e90"/><rect x="37.40" y="45.60" width="6" height="6.5" fill="#8e8e90"/><rect x="44.45" y="45.60" width="6" height="6.5" fill="#8e8e90"/><rect x="23.30" y="53.10" width="6" height="6.5" fill="#8e8e90"/><rect x="30.35" y="53.10" width="6" height="6.5" fill="#8e8e90"/><rect x="37.40" y="53.10" width="6" height="6.5" fill="#8e8e90"/><rect x="44.45" y="53.10" width="6" height="6.5" fill="#8e8e90"/><rect x="23.30" y="60.60" width="6" height="6.5" fill="#8e8e90"/><rect x="30.35" y="60.60" width="6" height="6.5" fill="#8e8e90"/><rect x="37.40" y="60.60" width="6" height="6.5" fill="#8e8e90"/><rect x="44.45" y="60.60" width="6" height="6.5" fill="#8e8e90"/><ellipse cx="60" cy="36" rx="2" ry="1.3" fill="#f2f2f2" stroke="#888" stroke-width="0.5"/><ellipse cx="65" cy="36" rx="2" ry="1.3" fill="#f2f2f2" stroke="#888" stroke-width="0.5"/><circle cx="62.5" cy="42.8" r="4.3" fill="#f4f4f4" stroke="#2a2a2a" stroke-width="1"/><ellipse cx="81.3" cy="39.3" rx="2.3" ry="1.5" fill="#eee" stroke="#888" stroke-width="0.5"/><ellipse cx="77" cy="42.5" rx="2.3" ry="1.5" fill="#eee" stroke="#888" stroke-width="0.5"/><ellipse cx="85.6" cy="42.5" rx="2.3" ry="1.5" fill="#eee" stroke="#888" stroke-width="0.5"/><ellipse cx="81.3" cy="45.5" rx="2.3" ry="1.5" fill="#eee" stroke="#888" stroke-width="0.5"/><rect x="58.5" y="51" width="4.8" height="3.2" fill="#f4f4f4" stroke="#8a8a8c" stroke-width="0.5"/><rect x="64.5" y="51" width="4.8" height="3.2" fill="#f4f4f4" stroke="#8a8a8c" stroke-width="0.5"/><rect x="70.5" y="51" width="4.8" height="3.2" fill="#f4f4f4" stroke="#8a8a8c" stroke-width="0.5"/><rect x="76.5" y="51" width="4.8" height="3.2" fill="#f4f4f4" stroke="#8a8a8c" stroke-width="0.5"/><rect x="82.5" y="51" width="4.8" height="3.2" fill="#f4f4f4" stroke="#8a8a8c" stroke-width="0.5"/><rect x="55.3" y="56" width="36.5" height="12.5" fill="#747476"/><rect x="58.5" y="58.0" width="4.8" height="3.4" fill="#f4f4f4"/><rect x="64.5" y="58.0" width="4.8" height="3.4" fill="#f4f4f4"/><rect x="70.5" y="58.0" width="4.8" height="3.4" fill="#f4f4f4"/><rect x="76.5" y="58.0" width="4.8" height="3.4" fill="#f4f4f4"/><rect x="82.5" y="58.0" width="4.8" height="3.4" fill="#f4f4f4"/><rect x="58.5" y="63.3" width="4.8" height="3.4" fill="#c8283a"/><rect x="64.5" y="63.3" width="4.8" height="3.4" fill="#c8283a"/><rect x="70.5" y="63.3" width="4.8" height="3.4" fill="#f4f4f4"/><rect x="76.5" y="63.3" width="4.8" height="3.4" fill="#f4f4f4"/><rect x="82.5" y="63.3" width="4.8" height="3.4" fill="#f4f4f4"/><circle cx="16" cy="16.5" r="2.3" fill="#2c2c2e"/><circle cx="16" cy="21.8" r="2.3" fill="#b02a30"/><circle cx="16" cy="28.6" r="1.8" fill="#2c2c2e"/><ellipse cx="15.3" cy="39.6" rx="2.6" ry="1.7" fill="#f6f6f6" stroke="#8a8a8c" stroke-width="0.5"/><ellipse cx="15.3" cy="43.8" rx="2.6" ry="1.7" fill="#f6f6f6" stroke="#8a8a8c" stroke-width="0.5"/><ellipse cx="15.3" cy="48" rx="2.6" ry="1.7" fill="#f6f6f6" stroke="#8a8a8c" stroke-width="0.5"/><ellipse cx="15.3" cy="52.3" rx="2.6" ry="1.7" fill="#f6f6f6" stroke="#8a8a8c" stroke-width="0.5"/><ellipse cx="15.3" cy="56.5" rx="2.6" ry="1.7" fill="#f6f6f6" stroke="#8a8a8c" stroke-width="0.5"/><path d="M14.5 61V69" stroke="#2a2a2a" stroke-width="1.2"/><circle cx="14.5" cy="62" r="1.4" fill="#f0f0f0"/></svg>
<svg class="a" style="left:30px;top:456.45px" width="104" height="90"><polygon points="5.1,71.5 97.8,71.5 98.3,82.5 4.6,82.5" fill="#727274" /><polygon points="4.6,80.5 98.3,80.5 98,83.5 5,83.5" fill="#4a4a4c" /><polygon points="8.1,6.7 94.1,6.7 95.8,71.5 7.1,71.5" fill="#a9a9ab" /><polygon points="10,8 92.5,8 93.8,70 9,70" fill="#e4e4e6" /><rect x="20.6" y="13.8" width="33.4" height="16.9" fill="#4b4b4d"/><rect x="22.2" y="16.6" width="30" height="12.6" fill="#141416"/><rect x="27" y="18.9" width="19.9" height="7.8" fill="#2d86f2"/><rect x="56.0" y="9.1" width="6.3" height="4.4" fill="#ababad"/><rect x="64.3" y="9.1" width="6.3" height="4.4" fill="#ababad"/><rect x="72.6" y="9.1" width="6.3" height="4.4" fill="#ababad"/><rect x="80.9" y="9.1" width="6.3" height="4.4" fill="#ababad"/><rect x="55.9" y="18.4" width="3.6" height="2.4" rx="0.8" fill="#5a7aaa"/><rect x="60.4" y="18.4" width="3.6" height="2.4" rx="0.8" fill="#5a7aaa"/><rect x="64.9" y="18.4" width="3.6" height="2.4" rx="0.8" fill="#5a7aaa"/><rect x="55.9" y="21.8" width="3.6" height="2.4" rx="0.8" fill="#5a7aaa"/><rect x="60.4" y="21.8" width="3.6" height="2.4" rx="0.8" fill="#5a7aaa"/><rect x="64.9" y="21.8" width="3.6" height="2.4" rx="0.8" fill="#5a7aaa"/><rect x="55.9" y="25.2" width="3.6" height="2.4" rx="0.8" fill="#5a7aaa"/><rect x="60.4" y="25.2" width="3.6" height="2.4" rx="0.8" fill="#5a7aaa"/><rect x="64.9" y="25.2" width="3.6" height="2.4" rx="0.8" fill="#5a7aaa"/><rect x="55.9" y="28.6" width="3.6" height="2.4" rx="0.8" fill="#5a7aaa"/><rect x="60.4" y="28.6" width="3.6" height="2.4" rx="0.8" fill="#5a7aaa"/><rect x="64.9" y="28.6" width="3.6" height="2.4" rx="0.8" fill="#5a7aaa"/><ellipse cx="76.0" cy="19.4" rx="2" ry="1.5" fill="#f6f6f6" stroke="#8a8a8c" stroke-width="0.5"/><ellipse cx="80.7" cy="19.4" rx="2" ry="1.5" fill="#f6f6f6" stroke="#8a8a8c" stroke-width="0.5"/><ellipse cx="85.4" cy="19.4" rx="2" ry="1.5" fill="#f6f6f6" stroke="#8a8a8c" stroke-width="0.5"/><ellipse cx="76.0" cy="23.0" rx="2" ry="1.5" fill="#f6f6f6" stroke="#8a8a8c" stroke-width="0.5"/><ellipse cx="80.7" cy="23.0" rx="2" ry="1.5" fill="#f6f6f6" stroke="#8a8a8c" stroke-width="0.5"/><ellipse cx="85.4" cy="23.0" rx="2" ry="1.5" fill="#f6f6f6" stroke="#8a8a8c" stroke-width="0.5"/><ellipse cx="76.0" cy="26.6" rx="2" ry="1.5" fill="#f6f6f6" stroke="#8a8a8c" stroke-width="0.5"/><ellipse cx="80.7" cy="26.6" rx="2" ry="1.5" fill="#f6f6f6" stroke="#8a8a8c" stroke-width="0.5"/><ellipse cx="85.4" cy="26.6" rx="2" ry="1.5" fill="#f6f6f6" stroke="#8a8a8c" stroke-width="0.5"/><ellipse cx="76.0" cy="30.2" rx="2" ry="1.5" fill="#f6f6f6" stroke="#8a8a8c" stroke-width="0.5"/><ellipse cx="80.7" cy="30.2" rx="2" ry="1.5" fill="#f6f6f6" stroke="#8a8a8c" stroke-width="0.5"/><ellipse cx="85.4" cy="30.2" rx="2" ry="1.5" fill="#f6f6f6" stroke="#8a8a8c" stroke-width="0.5"/><ellipse cx="76.0" cy="33.8" rx="2" ry="1.5" fill="#f6f6f6" stroke="#8a8a8c" stroke-width="0.5"/><ellipse cx="80.7" cy="33.8" rx="2" ry="1.5" fill="#f6f6f6" stroke="#8a8a8c" stroke-width="0.5"/><ellipse cx="85.4" cy="33.8" rx="2" ry="1.5" fill="#f6f6f6" stroke="#8a8a8c" stroke-width="0.5"/><ellipse cx="26.5" cy="33.2" rx="2.4" ry="1.4" fill="#f2f2f2" stroke="#8a8a8c" stroke-width="0.5"/><ellipse cx="33.5" cy="33.2" rx="2.4" ry="1.4" fill="#f2f2f2" stroke="#8a8a8c" stroke-width="0.5"/><ellipse cx="40.5" cy="33.2" rx="2.4" ry="1.4" fill="#f2f2f2" stroke="#8a8a8c" stroke-width="0.5"/><ellipse cx="47.5" cy="33.2" rx="2.4" ry="1.4" fill="#f2f2f2" stroke="#8a8a8c" stroke-width="0.5"/><rect x="22.3" y="37.1" width="28.6" height="30.7" fill="#4a4a4c"/><rect x="23.30" y="38.10" width="6" height="6.5" fill="#8e8e90"/><rect x="30.35" y="38.10" width="6" height="6.5" fill="#8e8e90"/><rect x="37.40" y="38.10" width="6" height="6.5" fill="#8e8e90"/><rect x="44.45" y="38.10" width="6" height="6.5" fill="#8e8e90"/><rect x="23.30" y="45.60" width="6" height="6.5" fill="#8e8e90"/><rect x="30.35" y="45.60" width="6" height="6.5" fill="#8e8e90"/><rect x="37.40" y="45.60" width="6" height="6.5" fill="#8e8e90"/><rect x="44.45" y="45.60" width="6" height="6.5" fill="#8e8e90"/><rect x="23.30" y="53.10" width="6" height="6.5" fill="#8e8e90"/><rect x="30.35" y="53.10" width="6" height="6.5" fill="#8e8e90"/><rect x="37.40" y="53.10" width="6" height="6.5" fill="#8e8e90"/><rect x="44.45" y="53.10" width="6" height="6.5" fill="#8e8e90"/><rect x="23.30" y="60.60" width="6" height="6.5" fill="#8e8e90"/><rect x="30.35" y="60.60" width="6" height="6.5" fill="#8e8e90"/><rect x="37.40" y="60.60" width="6" height="6.5" fill="#8e8e90"/><rect x="44.45" y="60.60" width="6" height="6.5" fill="#8e8e90"/><ellipse cx="60" cy="36" rx="2" ry="1.3" fill="#f2f2f2" stroke="#888" stroke-width="0.5"/><ellipse cx="65" cy="36" rx="2" ry="1.3" fill="#f2f2f2" stroke="#888" stroke-width="0.5"/><circle cx="62.5" cy="42.8" r="4.3" fill="#f4f4f4" stroke="#2a2a2a" stroke-width="1"/><ellipse cx="81.3" cy="39.3" rx="2.3" ry="1.5" fill="#eee" stroke="#888" stroke-width="0.5"/><ellipse cx="77" cy="42.5" rx="2.3" ry="1.5" fill="#eee" stroke="#888" stroke-width="0.5"/><ellipse cx="85.6" cy="42.5" rx="2.3" ry="1.5" fill="#eee" stroke="#888" stroke-width="0.5"/><ellipse cx="81.3" cy="45.5" rx="2.3" ry="1.5" fill="#eee" stroke="#888" stroke-width="0.5"/><rect x="58.5" y="51" width="4.8" height="3.2" fill="#f4f4f4" stroke="#8a8a8c" stroke-width="0.5"/><rect x="64.5" y="51" width="4.8" height="3.2" fill="#f4f4f4" stroke="#8a8a8c" stroke-width="0.5"/><rect x="70.5" y="51" width="4.8" height="3.2" fill="#f4f4f4" stroke="#8a8a8c" stroke-width="0.5"/><rect x="76.5" y="51" width="4.8" height="3.2" fill="#f4f4f4" stroke="#8a8a8c" stroke-width="0.5"/><rect x="82.5" y="51" width="4.8" height="3.2" fill="#f4f4f4" stroke="#8a8a8c" stroke-width="0.5"/><rect x="55.3" y="56" width="36.5" height="12.5" fill="#747476"/><rect x="58.5" y="58.0" width="4.8" height="3.4" fill="#f4f4f4"/><rect x="64.5" y="58.0" width="4.8" height="3.4" fill="#f4f4f4"/><rect x="70.5" y="58.0" width="4.8" height="3.4" fill="#f4f4f4"/><rect x="76.5" y="58.0" width="4.8" height="3.4" fill="#f4f4f4"/><rect x="82.5" y="58.0" width="4.8" height="3.4" fill="#f4f4f4"/><rect x="58.5" y="63.3" width="4.8" height="3.4" fill="#c8283a"/><rect x="64.5" y="63.3" width="4.8" height="3.4" fill="#c8283a"/><rect x="70.5" y="63.3" width="4.8" height="3.4" fill="#f4f4f4"/><rect x="76.5" y="63.3" width="4.8" height="3.4" fill="#f4f4f4"/><rect x="82.5" y="63.3" width="4.8" height="3.4" fill="#f4f4f4"/><circle cx="16" cy="16.5" r="2.3" fill="#2c2c2e"/><circle cx="16" cy="21.8" r="2.3" fill="#b02a30"/><circle cx="16" cy="28.6" r="1.8" fill="#2c2c2e"/><ellipse cx="15.3" cy="39.6" rx="2.6" ry="1.7" fill="#f6f6f6" stroke="#8a8a8c" stroke-width="0.5"/><ellipse cx="15.3" cy="43.8" rx="2.6" ry="1.7" fill="#f6f6f6" stroke="#8a8a8c" stroke-width="0.5"/><ellipse cx="15.3" cy="48" rx="2.6" ry="1.7" fill="#f6f6f6" stroke="#8a8a8c" stroke-width="0.5"/><ellipse cx="15.3" cy="52.3" rx="2.6" ry="1.7" fill="#f6f6f6" stroke="#8a8a8c" stroke-width="0.5"/><ellipse cx="15.3" cy="56.5" rx="2.6" ry="1.7" fill="#f6f6f6" stroke="#8a8a8c" stroke-width="0.5"/><path d="M14.5 61V69" stroke="#2a2a2a" stroke-width="1.2"/><circle cx="14.5" cy="62" r="1.4" fill="#f0f0f0"/></svg>
<svg class="a" style="left:30px;top:575.00px" width="100" height="100"><polygon points="87.3,21.7 95.6,17.6 94.5,86.2 82.5,92.2" fill="#6e4424" /><polygon points="16,43.5 72,52.5 72,84.7 16,70.5" fill="#a87443" /><polygon points="15.7,11.2 87.3,22.5 84,36.7 15,24" fill="#c28a52" /><polygon points="15.7,8.2 95.6,17.6 87.3,22.5 15.7,11.2" fill="#dcaa70" /><polygon points="6,30 15,24 84,36.7 75,45" fill="#b47c46" /><polygon points="14,34.5 71,44.5 70,50 13,39" fill="#e6e2dc" /><polygon points="14,33.5 71,43.5 71,44.8 14,34.8" fill="#202020" /><polygon points="6.7,38.2 73.5,51.7 73.5,55.5 6.7,41.5" fill="#9c6838" /><polygon points="7.5,42 14.2,42 13.5,75 9,75" fill="#b98350" /><polygon points="69,57 75.7,57 75,96 70,96" fill="#b98350" /><ellipse cx="40" cy="80" rx="2.5" ry="1.6" fill="#b8963c"/><ellipse cx="45" cy="81.5" rx="2.5" ry="1.6" fill="#b8963c"/><ellipse cx="49.5" cy="83" rx="2.5" ry="1.6" fill="#b8963c"/></svg>
<svg class="a" style="left:30px;top:715.00px" width="100" height="90"><polygon points="77.6,30.4 93.8,22.3 93.1,68.8 83,75" fill="#1d1e21" /><defs><pattern id="grl" width="2.4" height="2.4" patternUnits="userSpaceOnUse" patternTransform="rotate(35)"><rect width="2.4" height="2.4" fill="#a2a2a4"/><rect width="1" height="2.4" fill="#7e7e80"/></pattern></defs><polygon points="22.3,29.7 63.4,37.8 63.4,68.8 22.3,55.3" fill="url(#grl)" /><polygon points="64.7,39 82.3,42 82.3,73.5 64.7,69" fill="#828284" /><polygon points="64.7,39 82.3,42 82.3,73.5 64.7,69" fill="url(#grl)" opacity="0.55"/><polygon points="14.8,10.1 93.1,19.6 93.8,22.3 77.6,30.4 14.2,16.9" fill="#3b3e43" /><polygon points="6.7,21.6 14.2,16.9 77.6,30.4 67.5,33.7" fill="#9b9da1" /><circle cx="42.5" cy="24.5" r="1.2" fill="#222"/><rect x="10" y="19.5" width="5" height="2" fill="#e8e8e8" transform="rotate(11 12 20)"/><polygon points="6.7,21.6 67.5,33.7 70.9,38.5 6.7,26.3" fill="#1a1a1c" /><polygon points="9,22.8 67,34.3 67.5,35.8 9,24.3" fill="#d8d8da" /><path d="M12.8 27L14 63.5L25.5 58.5M63.6 39L64.5 79.6L76 74" stroke="#9a9a9c" stroke-width="1.5" fill="none"/></svg>
<svg class="a" style="left:30px;top:828.00px" width="100" height="110"><rect x="19.3" y="63" width="5.2" height="26" fill="#0b0b0c"/><ellipse cx="22" cy="89" rx="2.8" ry="2" fill="#c6a458"/><rect x="42" y="67" width="4.5" height="23" fill="#0b0b0c"/><ellipse cx="40.5" cy="92" rx="4" ry="1.8" fill="#a8904c"/><rect x="62.5" y="68" width="5.5" height="35" fill="#0b0b0c"/><ellipse cx="65.2" cy="103" rx="2.8" ry="2" fill="#c6a458"/><rect x="73" y="66" width="5" height="17" fill="#0b0b0c"/><ellipse cx="75.5" cy="83" rx="2.8" ry="2" fill="#c6a458"/><polygon points="24.3,39.5 62.1,8.4 73.9,10.9 85.6,21.8 68.9,38.6 45,36" fill="#0d0d0f" /><polygon points="30,38 62.1,11 68,14 50,37" fill="#4e321e" /><path d="M24.3 39.5L62.1 8.4" stroke="#cdb27a" stroke-width="2"/><polygon points="32,35.5 48.7,37.5 48,46 31.5,44" fill="#8d8f94" /><polygon points="48,40 89,40.3 89,44.5 50,44.5" fill="#6a4228" /><polygon points="8.4,54.6 17.6,42.8 60.5,50 89,42.5 89,55.4 78,63.8 52.9,68.9 8.4,57.9" fill="#111113" /><polygon points="12.6,54.2 52,60 52,61.8 12.6,56.3" fill="#cfcfd1" /><path d="M79 44V62M83 43.5V58M87 43V55" stroke="#5a5a5e" stroke-width="1.2"/></svg>
<svg class="a" style="left:30px;top:970.00px" width="100" height="92"><path d="M38.5 30.6L70.5 79M64.1 36.3L34.9 69.1M21.4 74L47.7 63.4M56.3 86.9L81.2 73.4" stroke="#121214" stroke-width="1.6" fill="none"/><polygon points="5.7,20.7 17.8,14.2 91.9,25.6 92.6,29.9 74.1,37 5.7,23" fill="#c9182a" /><polygon points="17.8,14.2 91.9,25.6 78,28 16,18" fill="#e52436" /><polygon points="17.8,20.7 81.2,30.6 73.4,34.2 17.1,23.5" fill="#efefef" /><polygon points="17.1,23.5 73.4,34.2 74,36 17.5,25" fill="#1a1a1a" /><polygon points="20,15.5 50,19 48,21 22,18" fill="#4a2a55" /></svg>
<svg class="a" style="left:30px;top:1098.70px" width="104" height="90"><polygon points="5.1,71.5 97.8,71.5 98.3,82.5 4.6,82.5" fill="#727274" /><polygon points="4.6,80.5 98.3,80.5 98,83.5 5,83.5" fill="#4a4a4c" /><polygon points="8.1,6.7 94.1,6.7 95.8,71.5 7.1,71.5" fill="#a9a9ab" /><polygon points="10,8 92.5,8 93.8,70 9,70" fill="#e4e4e6" /><rect x="20.6" y="13.8" width="33.4" height="16.9" fill="#4b4b4d"/><rect x="22.2" y="16.6" width="30" height="12.6" fill="#141416"/><rect x="27" y="18.9" width="19.9" height="7.8" fill="#2d86f2"/><rect x="56.0" y="9.1" width="6.3" height="4.4" fill="#ababad"/><rect x="64.3" y="9.1" width="6.3" height="4.4" fill="#ababad"/><rect x="72.6" y="9.1" width="6.3" height="4.4" fill="#ababad"/><rect x="80.9" y="9.1" width="6.3" height="4.4" fill="#ababad"/><rect x="55.9" y="18.4" width="3.6" height="2.4" rx="0.8" fill="#5a7aaa"/><rect x="60.4" y="18.4" width="3.6" height="2.4" rx="0.8" fill="#5a7aaa"/><rect x="64.9" y="18.4" width="3.6" height="2.4" rx="0.8" fill="#5a7aaa"/><rect x="55.9" y="21.8" width="3.6" height="2.4" rx="0.8" fill="#5a7aaa"/><rect x="60.4" y="21.8" width="3.6" height="2.4" rx="0.8" fill="#5a7aaa"/><rect x="64.9" y="21.8" width="3.6" height="2.4" rx="0.8" fill="#5a7aaa"/><rect x="55.9" y="25.2" width="3.6" height="2.4" rx="0.8" fill="#5a7aaa"/><rect x="60.4" y="25.2" width="3.6" height="2.4" rx="0.8" fill="#5a7aaa"/><rect x="64.9" y="25.2" width="3.6" height="2.4" rx="0.8" fill="#5a7aaa"/><rect x="55.9" y="28.6" width="3.6" height="2.4" rx="0.8" fill="#5a7aaa"/><rect x="60.4" y="28.6" width="3.6" height="2.4" rx="0.8" fill="#5a7aaa"/><rect x="64.9" y="28.6" width="3.6" height="2.4" rx="0.8" fill="#5a7aaa"/><ellipse cx="76.0" cy="19.4" rx="2" ry="1.5" fill="#f6f6f6" stroke="#8a8a8c" stroke-width="0.5"/><ellipse cx="80.7" cy="19.4" rx="2" ry="1.5" fill="#f6f6f6" stroke="#8a8a8c" stroke-width="0.5"/><ellipse cx="85.4" cy="19.4" rx="2" ry="1.5" fill="#f6f6f6" stroke="#8a8a8c" stroke-width="0.5"/><ellipse cx="76.0" cy="23.0" rx="2" ry="1.5" fill="#f6f6f6" stroke="#8a8a8c" stroke-width="0.5"/><ellipse cx="80.7" cy="23.0" rx="2" ry="1.5" fill="#f6f6f6" stroke="#8a8a8c" stroke-width="0.5"/><ellipse cx="85.4" cy="23.0" rx="2" ry="1.5" fill="#f6f6f6" stroke="#8a8a8c" stroke-width="0.5"/><ellipse cx="76.0" cy="26.6" rx="2" ry="1.5" fill="#f6f6f6" stroke="#8a8a8c" stroke-width="0.5"/><ellipse cx="80.7" cy="26.6" rx="2" ry="1.5" fill="#f6f6f6" stroke="#8a8a8c" stroke-width="0.5"/><ellipse cx="85.4" cy="26.6" rx="2" ry="1.5" fill="#f6f6f6" stroke="#8a8a8c" stroke-width="0.5"/><ellipse cx="76.0" cy="30.2" rx="2" ry="1.5" fill="#f6f6f6" stroke="#8a8a8c" stroke-width="0.5"/><ellipse cx="80.7" cy="30.2" rx="2" ry="1.5" fill="#f6f6f6" stroke="#8a8a8c" stroke-width="0.5"/><ellipse cx="85.4" cy="30.2" rx="2" ry="1.5" fill="#f6f6f6" stroke="#8a8a8c" stroke-width="0.5"/><ellipse cx="76.0" cy="33.8" rx="2" ry="1.5" fill="#f6f6f6" stroke="#8a8a8c" stroke-width="0.5"/><ellipse cx="80.7" cy="33.8" rx="2" ry="1.5" fill="#f6f6f6" stroke="#8a8a8c" stroke-width="0.5"/><ellipse cx="85.4" cy="33.8" rx="2" ry="1.5" fill="#f6f6f6" stroke="#8a8a8c" stroke-width="0.5"/><ellipse cx="26.5" cy="33.2" rx="2.4" ry="1.4" fill="#f2f2f2" stroke="#8a8a8c" stroke-width="0.5"/><ellipse cx="33.5" cy="33.2" rx="2.4" ry="1.4" fill="#f2f2f2" stroke="#8a8a8c" stroke-width="0.5"/><ellipse cx="40.5" cy="33.2" rx="2.4" ry="1.4" fill="#f2f2f2" stroke="#8a8a8c" stroke-width="0.5"/><ellipse cx="47.5" cy="33.2" rx="2.4" ry="1.4" fill="#f2f2f2" stroke="#8a8a8c" stroke-width="0.5"/><rect x="22.3" y="37.1" width="28.6" height="30.7" fill="#4a4a4c"/><rect x="23.30" y="38.10" width="6" height="6.5" fill="#8e8e90"/><rect x="30.35" y="38.10" width="6" height="6.5" fill="#8e8e90"/><rect x="37.40" y="38.10" width="6" height="6.5" fill="#8e8e90"/><rect x="44.45" y="38.10" width="6" height="6.5" fill="#8e8e90"/><rect x="23.30" y="45.60" width="6" height="6.5" fill="#8e8e90"/><rect x="30.35" y="45.60" width="6" height="6.5" fill="#8e8e90"/><rect x="37.40" y="45.60" width="6" height="6.5" fill="#8e8e90"/><rect x="44.45" y="45.60" width="6" height="6.5" fill="#8e8e90"/><rect x="23.30" y="53.10" width="6" height="6.5" fill="#8e8e90"/><rect x="30.35" y="53.10" width="6" height="6.5" fill="#8e8e90"/><rect x="37.40" y="53.10" width="6" height="6.5" fill="#8e8e90"/><rect x="44.45" y="53.10" width="6" height="6.5" fill="#8e8e90"/><rect x="23.30" y="60.60" width="6" height="6.5" fill="#8e8e90"/><rect x="30.35" y="60.60" width="6" height="6.5" fill="#8e8e90"/><rect x="37.40" y="60.60" width="6" height="6.5" fill="#8e8e90"/><rect x="44.45" y="60.60" width="6" height="6.5" fill="#8e8e90"/><ellipse cx="60" cy="36" rx="2" ry="1.3" fill="#f2f2f2" stroke="#888" stroke-width="0.5"/><ellipse cx="65" cy="36" rx="2" ry="1.3" fill="#f2f2f2" stroke="#888" stroke-width="0.5"/><circle cx="62.5" cy="42.8" r="4.3" fill="#f4f4f4" stroke="#2a2a2a" stroke-width="1"/><ellipse cx="81.3" cy="39.3" rx="2.3" ry="1.5" fill="#eee" stroke="#888" stroke-width="0.5"/><ellipse cx="77" cy="42.5" rx="2.3" ry="1.5" fill="#eee" stroke="#888" stroke-width="0.5"/><ellipse cx="85.6" cy="42.5" rx="2.3" ry="1.5" fill="#eee" stroke="#888" stroke-width="0.5"/><ellipse cx="81.3" cy="45.5" rx="2.3" ry="1.5" fill="#eee" stroke="#888" stroke-width="0.5"/><rect x="58.5" y="51" width="4.8" height="3.2" fill="#f4f4f4" stroke="#8a8a8c" stroke-width="0.5"/><rect x="64.5" y="51" width="4.8" height="3.2" fill="#f4f4f4" stroke="#8a8a8c" stroke-width="0.5"/><rect x="70.5" y="51" width="4.8" height="3.2" fill="#f4f4f4" stroke="#8a8a8c" stroke-width="0.5"/><rect x="76.5" y="51" width="4.8" height="3.2" fill="#f4f4f4" stroke="#8a8a8c" stroke-width="0.5"/><rect x="82.5" y="51" width="4.8" height="3.2" fill="#f4f4f4" stroke="#8a8a8c" stroke-width="0.5"/><rect x="55.3" y="56" width="36.5" height="12.5" fill="#747476"/><rect x="58.5" y="58.0" width="4.8" height="3.4" fill="#f4f4f4"/><rect x="64.5" y="58.0" width="4.8" height="3.4" fill="#f4f4f4"/><rect x="70.5" y="58.0" width="4.8" height="3.4" fill="#f4f4f4"/><rect x="76.5" y="58.0" width="4.8" height="3.4" fill="#f4f4f4"/><rect x="82.5" y="58.0" width="4.8" height="3.4" fill="#f4f4f4"/><rect x="58.5" y="63.3" width="4.8" height="3.4" fill="#c8283a"/><rect x="64.5" y="63.3" width="4.8" height="3.4" fill="#c8283a"/><rect x="70.5" y="63.3" width="4.8" height="3.4" fill="#f4f4f4"/><rect x="76.5" y="63.3" width="4.8" height="3.4" fill="#f4f4f4"/><rect x="82.5" y="63.3" width="4.8" height="3.4" fill="#f4f4f4"/><circle cx="16" cy="16.5" r="2.3" fill="#2c2c2e"/><circle cx="16" cy="21.8" r="2.3" fill="#b02a30"/><circle cx="16" cy="28.6" r="1.8" fill="#2c2c2e"/><ellipse cx="15.3" cy="39.6" rx="2.6" ry="1.7" fill="#f6f6f6" stroke="#8a8a8c" stroke-width="0.5"/><ellipse cx="15.3" cy="43.8" rx="2.6" ry="1.7" fill="#f6f6f6" stroke="#8a8a8c" stroke-width="0.5"/><ellipse cx="15.3" cy="48" rx="2.6" ry="1.7" fill="#f6f6f6" stroke="#8a8a8c" stroke-width="0.5"/><ellipse cx="15.3" cy="52.3" rx="2.6" ry="1.7" fill="#f6f6f6" stroke="#8a8a8c" stroke-width="0.5"/><ellipse cx="15.3" cy="56.5" rx="2.6" ry="1.7" fill="#f6f6f6" stroke="#8a8a8c" stroke-width="0.5"/><path d="M14.5 61V69" stroke="#2a2a2a" stroke-width="1.2"/><circle cx="14.5" cy="62" r="1.4" fill="#f0f0f0"/></svg>
<svg class="a" style="left:30px;top:1227.15px" width="104" height="90"><polygon points="5.1,71.5 97.8,71.5 98.3,82.5 4.6,82.5" fill="#727274" /><polygon points="4.6,80.5 98.3,80.5 98,83.5 5,83.5" fill="#4a4a4c" /><polygon points="8.1,6.7 94.1,6.7 95.8,71.5 7.1,71.5" fill="#a9a9ab" /><polygon points="10,8 92.5,8 93.8,70 9,70" fill="#e4e4e6" /><rect x="20.6" y="13.8" width="33.4" height="16.9" fill="#4b4b4d"/><rect x="22.2" y="16.6" width="30" height="12.6" fill="#141416"/><rect x="27" y="18.9" width="19.9" height="7.8" fill="#2d86f2"/><rect x="56.0" y="9.1" width="6.3" height="4.4" fill="#ababad"/><rect x="64.3" y="9.1" width="6.3" height="4.4" fill="#ababad"/><rect x="72.6" y="9.1" width="6.3" height="4.4" fill="#ababad"/><rect x="80.9" y="9.1" width="6.3" height="4.4" fill="#ababad"/><rect x="55.9" y="18.4" width="3.6" height="2.4" rx="0.8" fill="#5a7aaa"/><rect x="60.4" y="18.4" width="3.6" height="2.4" rx="0.8" fill="#5a7aaa"/><rect x="64.9" y="18.4" width="3.6" height="2.4" rx="0.8" fill="#5a7aaa"/><rect x="55.9" y="21.8" width="3.6" height="2.4" rx="0.8" fill="#5a7aaa"/><rect x="60.4" y="21.8" width="3.6" height="2.4" rx="0.8" fill="#5a7aaa"/><rect x="64.9" y="21.8" width="3.6" height="2.4" rx="0.8" fill="#5a7aaa"/><rect x="55.9" y="25.2" width="3.6" height="2.4" rx="0.8" fill="#5a7aaa"/><rect x="60.4" y="25.2" width="3.6" height="2.4" rx="0.8" fill="#5a7aaa"/><rect x="64.9" y="25.2" width="3.6" height="2.4" rx="0.8" fill="#5a7aaa"/><rect x="55.9" y="28.6" width="3.6" height="2.4" rx="0.8" fill="#5a7aaa"/><rect x="60.4" y="28.6" width="3.6" height="2.4" rx="0.8" fill="#5a7aaa"/><rect x="64.9" y="28.6" width="3.6" height="2.4" rx="0.8" fill="#5a7aaa"/><ellipse cx="76.0" cy="19.4" rx="2" ry="1.5" fill="#f6f6f6" stroke="#8a8a8c" stroke-width="0.5"/><ellipse cx="80.7" cy="19.4" rx="2" ry="1.5" fill="#f6f6f6" stroke="#8a8a8c" stroke-width="0.5"/><ellipse cx="85.4" cy="19.4" rx="2" ry="1.5" fill="#f6f6f6" stroke="#8a8a8c" stroke-width="0.5"/><ellipse cx="76.0" cy="23.0" rx="2" ry="1.5" fill="#f6f6f6" stroke="#8a8a8c" stroke-width="0.5"/><ellipse cx="80.7" cy="23.0" rx="2" ry="1.5" fill="#f6f6f6" stroke="#8a8a8c" stroke-width="0.5"/><ellipse cx="85.4" cy="23.0" rx="2" ry="1.5" fill="#f6f6f6" stroke="#8a8a8c" stroke-width="0.5"/><ellipse cx="76.0" cy="26.6" rx="2" ry="1.5" fill="#f6f6f6" stroke="#8a8a8c" stroke-width="0.5"/><ellipse cx="80.7" cy="26.6" rx="2" ry="1.5" fill="#f6f6f6" stroke="#8a8a8c" stroke-width="0.5"/><ellipse cx="85.4" cy="26.6" rx="2" ry="1.5" fill="#f6f6f6" stroke="#8a8a8c" stroke-width="0.5"/><ellipse cx="76.0" cy="30.2" rx="2" ry="1.5" fill="#f6f6f6" stroke="#8a8a8c" stroke-width="0.5"/><ellipse cx="80.7" cy="30.2" rx="2" ry="1.5" fill="#f6f6f6" stroke="#8a8a8c" stroke-width="0.5"/><ellipse cx="85.4" cy="30.2" rx="2" ry="1.5" fill="#f6f6f6" stroke="#8a8a8c" stroke-width="0.5"/><ellipse cx="76.0" cy="33.8" rx="2" ry="1.5" fill="#f6f6f6" stroke="#8a8a8c" stroke-width="0.5"/><ellipse cx="80.7" cy="33.8" rx="2" ry="1.5" fill="#f6f6f6" stroke="#8a8a8c" stroke-width="0.5"/><ellipse cx="85.4" cy="33.8" rx="2" ry="1.5" fill="#f6f6f6" stroke="#8a8a8c" stroke-width="0.5"/><ellipse cx="26.5" cy="33.2" rx="2.4" ry="1.4" fill="#f2f2f2" stroke="#8a8a8c" stroke-width="0.5"/><ellipse cx="33.5" cy="33.2" rx="2.4" ry="1.4" fill="#f2f2f2" stroke="#8a8a8c" stroke-width="0.5"/><ellipse cx="40.5" cy="33.2" rx="2.4" ry="1.4" fill="#f2f2f2" stroke="#8a8a8c" stroke-width="0.5"/><ellipse cx="47.5" cy="33.2" rx="2.4" ry="1.4" fill="#f2f2f2" stroke="#8a8a8c" stroke-width="0.5"/><rect x="22.3" y="37.1" width="28.6" height="30.7" fill="#4a4a4c"/><rect x="23.30" y="38.10" width="6" height="6.5" fill="#8e8e90"/><rect x="30.35" y="38.10" width="6" height="6.5" fill="#8e8e90"/><rect x="37.40" y="38.10" width="6" height="6.5" fill="#8e8e90"/><rect x="44.45" y="38.10" width="6" height="6.5" fill="#8e8e90"/><rect x="23.30" y="45.60" width="6" height="6.5" fill="#8e8e90"/><rect x="30.35" y="45.60" width="6" height="6.5" fill="#8e8e90"/><rect x="37.40" y="45.60" width="6" height="6.5" fill="#8e8e90"/><rect x="44.45" y="45.60" width="6" height="6.5" fill="#8e8e90"/><rect x="23.30" y="53.10" width="6" height="6.5" fill="#8e8e90"/><rect x="30.35" y="53.10" width="6" height="6.5" fill="#8e8e90"/><rect x="37.40" y="53.10" width="6" height="6.5" fill="#8e8e90"/><rect x="44.45" y="53.10" width="6" height="6.5" fill="#8e8e90"/><rect x="23.30" y="60.60" width="6" height="6.5" fill="#8e8e90"/><rect x="30.35" y="60.60" width="6" height="6.5" fill="#8e8e90"/><rect x="37.40" y="60.60" width="6" height="6.5" fill="#8e8e90"/><rect x="44.45" y="60.60" width="6" height="6.5" fill="#8e8e90"/><ellipse cx="60" cy="36" rx="2" ry="1.3" fill="#f2f2f2" stroke="#888" stroke-width="0.5"/><ellipse cx="65" cy="36" rx="2" ry="1.3" fill="#f2f2f2" stroke="#888" stroke-width="0.5"/><circle cx="62.5" cy="42.8" r="4.3" fill="#f4f4f4" stroke="#2a2a2a" stroke-width="1"/><ellipse cx="81.3" cy="39.3" rx="2.3" ry="1.5" fill="#eee" stroke="#888" stroke-width="0.5"/><ellipse cx="77" cy="42.5" rx="2.3" ry="1.5" fill="#eee" stroke="#888" stroke-width="0.5"/><ellipse cx="85.6" cy="42.5" rx="2.3" ry="1.5" fill="#eee" stroke="#888" stroke-width="0.5"/><ellipse cx="81.3" cy="45.5" rx="2.3" ry="1.5" fill="#eee" stroke="#888" stroke-width="0.5"/><rect x="58.5" y="51" width="4.8" height="3.2" fill="#f4f4f4" stroke="#8a8a8c" stroke-width="0.5"/><rect x="64.5" y="51" width="4.8" height="3.2" fill="#f4f4f4" stroke="#8a8a8c" stroke-width="0.5"/><rect x="70.5" y="51" width="4.8" height="3.2" fill="#f4f4f4" stroke="#8a8a8c" stroke-width="0.5"/><rect x="76.5" y="51" width="4.8" height="3.2" fill="#f4f4f4" stroke="#8a8a8c" stroke-width="0.5"/><rect x="82.5" y="51" width="4.8" height="3.2" fill="#f4f4f4" stroke="#8a8a8c" stroke-width="0.5"/><rect x="55.3" y="56" width="36.5" height="12.5" fill="#747476"/><rect x="58.5" y="58.0" width="4.8" height="3.4" fill="#f4f4f4"/><rect x="64.5" y="58.0" width="4.8" height="3.4" fill="#f4f4f4"/><rect x="70.5" y="58.0" width="4.8" height="3.4" fill="#f4f4f4"/><rect x="76.5" y="58.0" width="4.8" height="3.4" fill="#f4f4f4"/><rect x="82.5" y="58.0" width="4.8" height="3.4" fill="#f4f4f4"/><rect x="58.5" y="63.3" width="4.8" height="3.4" fill="#c8283a"/><rect x="64.5" y="63.3" width="4.8" height="3.4" fill="#c8283a"/><rect x="70.5" y="63.3" width="4.8" height="3.4" fill="#f4f4f4"/><rect x="76.5" y="63.3" width="4.8" height="3.4" fill="#f4f4f4"/><rect x="82.5" y="63.3" width="4.8" height="3.4" fill="#f4f4f4"/><circle cx="16" cy="16.5" r="2.3" fill="#2c2c2e"/><circle cx="16" cy="21.8" r="2.3" fill="#b02a30"/><circle cx="16" cy="28.6" r="1.8" fill="#2c2c2e"/><ellipse cx="15.3" cy="39.6" rx="2.6" ry="1.7" fill="#f6f6f6" stroke="#8a8a8c" stroke-width="0.5"/><ellipse cx="15.3" cy="43.8" rx="2.6" ry="1.7" fill="#f6f6f6" stroke="#8a8a8c" stroke-width="0.5"/><ellipse cx="15.3" cy="48" rx="2.6" ry="1.7" fill="#f6f6f6" stroke="#8a8a8c" stroke-width="0.5"/><ellipse cx="15.3" cy="52.3" rx="2.6" ry="1.7" fill="#f6f6f6" stroke="#8a8a8c" stroke-width="0.5"/><ellipse cx="15.3" cy="56.5" rx="2.6" ry="1.7" fill="#f6f6f6" stroke="#8a8a8c" stroke-width="0.5"/><path d="M14.5 61V69" stroke="#2a2a2a" stroke-width="1.2"/><circle cx="14.5" cy="62" r="1.4" fill="#f0f0f0"/></svg>
<div class="a" style="left:156.5px;top:736.3px;width:4.3px;height:36.1px;border-radius:2.2px;background:#5a5a5c"></div>
<div class="a" style="left:1034.9px;top:174px;width:5.2px;height:1160px;background:#000;opacity:0.55"></div>
<div class="a" style="left:1035.9px;top:174px;width:3.2px;height:1160px;background:#fafafa"></div>
<svg class="a" style="left:1010px;top:128px" width="56" height="52"><path d="M5.1 5H49.7V28.2L27.5 47.9L5.1 28.2Z" fill="#3c3c3e" fill-opacity="0.92" stroke="#000" stroke-width="4.2" stroke-linejoin="miter"/><path d="M5.1 5H49.7V28.2L27.5 47.9L5.1 28.2Z" fill="#3c3c3e" stroke="#f4f4f4" stroke-width="2.2"/><path d="M34.1 6V45" stroke="#9a9a9c" stroke-width="1.8"/></svg>
<div class="a" style="left:704.8px;top:1313px;width:511px;height:8.5px;border-radius:4.25px;background:rgba(150,150,150,0.45)"></div>

<svg class="a" style="left:0;top:0" width="1920" height="132">
 <defs>
  <linearGradient id="lvl" x1="1153" x2="1347" gradientUnits="userSpaceOnUse">
   <stop offset="0" stop-color="#4cd964"/><stop offset="0.78" stop-color="#4cd964"/><stop offset="0.9" stop-color="#ffcc00"/><stop offset="1" stop-color="#ffcc00"/>
  </linearGradient>
  <linearGradient id="kn" x1="0" x2="0" y1="0" y2="1"><stop offset="0" stop-color="#ffd23a"/><stop offset="1" stop-color="#ff9f2a"/></linearGradient>
 </defs>
 <!-- document -->
 <path d="M44.2 58.3H55.6L70.1 72.9V92.7Q70.1 96.9 65.9 96.9H44.2Q40 96.9 40 92.7V62.5Q40 58.3 44.2 58.3Z" fill="#c8c8ca"/>
 <path d="M55.6 58.3V69Q55.6 72.9 59.5 72.9H70.1" fill="none" stroke="#161618" stroke-width="1.8"/>
 <!-- group 1 -->
 <rect x="119.5" y="50.2" width="138.1" height="54.8" rx="7.5" fill="#1b1b1d"/>
 <rect x="187.3" y="50.2" width="1.2" height="54.8" fill="#2a2a2c"/>
 <g fill="none" stroke="#cfcfd1" stroke-width="2.9">
  <rect x="125.8" y="72.9" width="10.3" height="10.3" rx="2.6"/>
  <rect x="141.3" y="66.1" width="23.3" height="24" rx="4.2"/>
  <rect x="169.8" y="72.9" width="10.5" height="10.3" rx="2.6"/>
  <rect x="204.6" y="63.4" width="38.6" height="29.7" rx="5.6"/>
 </g>
 <g fill="#cfcfd1">
  <rect x="210.9" y="64.5" width="5.7" height="16" rx="0.8"/>
  <rect x="221.1" y="64.5" width="5.6" height="16" rx="0.8"/>
  <rect x="231.3" y="64.5" width="5.5" height="16" rx="0.8"/>
  <rect x="213.2" y="79" width="1.6" height="13"/>
  <rect x="223.3" y="79" width="1.6" height="13"/>
  <rect x="233.4" y="79" width="1.6" height="13"/>
 </g>
 <!-- group 2 -->
 <rect x="293.3" y="50.4" width="139.6" height="55" rx="7.5" fill="#1b1b1d"/>
 <rect x="361.2" y="50.4" width="1.2" height="55" fill="#2a2a2c"/>
 <g stroke="#cfcfd1" stroke-width="3" stroke-linecap="round" fill="none">
  <path d="M314.8 64.8V92.3M326.5 64.8V92.3M338.3 64.8V92.3"/>
 </g>
 <g stroke="#cfcfd1" stroke-width="2.6" fill="#1b1b1d">
  <circle cx="314.8" cy="82.9" r="3.6"/><circle cx="326.5" cy="72.75" r="3.6"/><circle cx="338.3" cy="82.9" r="3.6"/>
 </g>
 <path d="M379.9 89.6V66.6H393.6M379.9 77.6H392.8M398.2 66.6L417 89.6M417 66.6L398.2 89.6" stroke="#cfcfd1" stroke-width="3.1" stroke-linecap="round" stroke-linejoin="round" fill="none"/>
 <!-- undo -->
 <path d="M562.8 63.4L551.6 73.7L562.8 84.4M551.6 73.7H573.6A9.6 9.6 0 0 1 573.6 92.9H567.4" stroke="#cfcfd1" stroke-width="2.6" stroke-linecap="round" stroke-linejoin="round" fill="none"/>
 <!-- transport -->
 <rect x="819.4" y="50.2" width="283.6" height="55.1" rx="7.5" fill="#1b1b1d"/>
 <rect x="904.2" y="50.2" width="113.3" height="55.1" fill="#173f1f"/>
 <rect x="843" y="61.6" width="32.3" height="32.6" rx="4" fill="#c6c6c8" stroke="#0c0c0c" stroke-width="0.8"/>
 <path d="M949.2 62.9L974.6 76.7Q976.6 78.3 974.6 79.9L949.2 93.7Q947.2 94.7 947.2 92.5V64.1Q947.2 61.9 949.2 62.9Z" fill="#4cd964"/>
 <circle cx="1060.85" cy="78.65" r="19.2" fill="#ff3b30"/>
 <!-- level meter -->
 <rect x="1149" y="68.4" width="203" height="19" rx="9.5" fill="#0b0b0c"/>
 <rect x="1153.3" y="70.9" width="193.5" height="5.7" rx="2.85" fill="url(#lvl)"/>
 <rect x="1153.3" y="79.2" width="193.5" height="5.7" rx="2.85" fill="url(#lvl)"/>
 <circle cx="1366.7" cy="77.4" r="15.6" fill="#454547" stroke="#c4c4c6" stroke-width="2"/>
 <rect x="1357" y="71" width="10" height="5.5" fill="url(#kn)"/>
 <rect x="1357" y="79.2" width="10" height="5.5" fill="url(#kn)"/>
 <!-- metronome -->
 <g stroke="#cfcfd1" stroke-width="2.9" fill="none" stroke-linecap="round" stroke-linejoin="round">
  <path d="M1440.7 65.6Q1442.9 61.8 1445.1 65.6L1457.4 89.2Q1459.2 93.3 1455 93.3H1430.8Q1426.6 93.3 1428.4 89.2Z"/>
  <path d="M1431.2 85H1454.4M1442.9 67V82.5M1443.5 84.6L1458.4 70.2"/>
 </g>
 <!-- loop -->
 <g stroke="#cfcfd1" stroke-width="3" fill="none" stroke-linecap="round">
  <path d="M1676.2 93.7H1713.8"/>
  <path d="M1688.6 91.4A15.3 15.3 0 1 1 1695 93.7"/>
 </g>
 <!-- gear -->
 <path d="M1793.86 76.71L1797.97 76.78L1797.97 78.72L1793.86 78.79L1793.64 80.49L1797.59 81.62L1797.09 83.50L1793.10 82.50L1792.45 84.08L1795.97 86.19L1795.00 87.88L1791.40 85.88L1790.36 87.24L1793.22 90.20L1791.85 91.57L1788.89 88.71L1787.53 89.75L1789.53 93.35L1787.84 94.32L1785.73 90.80L1784.15 91.45L1785.15 95.44L1783.27 95.94L1782.14 91.99L1780.44 92.21L1780.37 96.32L1778.43 96.32L1778.36 92.21L1776.66 91.99L1775.53 95.94L1773.65 95.44L1774.65 91.45L1773.07 90.80L1770.96 94.32L1769.27 93.35L1771.27 89.75L1769.91 88.71L1766.95 91.57L1765.58 90.20L1768.44 87.24L1767.40 85.88L1763.80 87.88L1762.83 86.19L1766.35 84.08L1765.70 82.50L1761.71 83.50L1761.21 81.62L1765.16 80.49L1764.94 78.79L1760.83 78.72L1760.83 76.78L1764.94 76.71L1765.16 75.01L1761.21 73.88L1761.71 72.00L1765.70 73.00L1766.35 71.42L1762.83 69.31L1763.80 67.62L1767.40 69.62L1768.44 68.26L1765.58 65.30L1766.95 63.93L1769.91 66.79L1771.27 65.75L1769.27 62.15L1770.96 61.18L1773.07 64.70L1774.65 64.05L1773.65 60.06L1775.53 59.56L1776.66 63.51L1778.36 63.29L1778.43 59.18L1780.37 59.18L1780.44 63.29L1782.14 63.51L1783.27 59.56L1785.15 60.06L1784.15 64.05L1785.73 64.70L1787.84 61.18L1789.53 62.15L1787.53 65.75L1788.89 66.79L1791.85 63.93L1793.22 65.30L1790.36 68.26L1791.40 69.62L1795.00 67.62L1795.97 69.31L1792.45 71.42L1793.10 73.00L1797.09 72.00L1797.59 73.88L1793.64 75.01Z" fill="#cfcfd1"/>
 <circle cx="1779.4" cy="77.75" r="13.2" fill="#232325"/>
 <circle cx="1779.4" cy="77.75" r="13.6" fill="none" stroke="#cfcfd1" stroke-width="2.4"/>
 <g stroke="#cfcfd1" stroke-width="2.3" fill="none">
  <circle cx="1779.4" cy="77.75" r="3.6"/>
  <path d="M1783 77.75H1793M1777.6 74.6L1772.6 66M1777.6 80.9L1772.6 89.5"/>
 </g>
 <!-- help -->
 <circle cx="1864.4" cy="77.75" r="17.7" fill="#cfcfd1"/>
 <path d="M1859.8 72.9Q1860 68.3 1864.6 68.3Q1869.2 68.3 1869.2 72.6Q1869.2 75.1 1866.4 76.7Q1864.6 77.8 1864.6 80.6" stroke="#1c1c1e" stroke-width="2.5" fill="none" stroke-linecap="round"/>
 <circle cx="1864.6" cy="85.6" r="1.7" fill="#1c1c1e"/>
 <!-- status right -->
 <rect x="1602.5" y="5" width="78.3" height="29.2" rx="14.6" fill="#e7443a"/>
 <circle cx="1641.7" cy="19.4" r="9.3" fill="none" stroke="#fff" stroke-width="1.8"/>
 <circle cx="1641.7" cy="19.4" r="4.6" fill="#fff"/>
 <circle cx="1641.7" cy="19.4" r="1.6" fill="#f6d6d4"/>
 <circle cx="1699.2" cy="19.7" r="6.5" fill="#f5a30c"/>
 <g fill="none" stroke="#fff" stroke-width="2.5" stroke-linecap="round">
  <path d="M1713 17.3A14 14 0 0 1 1733.6 17.3"/>
  <path d="M1716.7 21.1A8.8 8.8 0 0 1 1729.9 21.1"/>
 </g>
 <path d="M1719.9 24.6A4.6 4.6 0 0 1 1726.7 24.6L1723.3 28.1Z" fill="#fff"/>
 <g fill="none" stroke="#fff" stroke-width="2">
  <path d="M1758.6 19.6A8 8 0 1 1 1751.4 11.8"/>
 </g>
 <path d="M1757 17.5L1760.8 21.6L1762 16.6Z" fill="#fff"/>
 <rect x="1747.6" y="18.2" width="7.6" height="5.8" rx="1" fill="#fff"/>
 <path d="M1749.3 18.5V16.4A2.1 2.1 0 0 1 1753.5 16.4V18.5" stroke="#fff" stroke-width="1.4" fill="none"/>
 <circle cx="1776" cy="19.6" r="7.6" fill="#fff"/><circle cx="1781.2" cy="15.2" r="6.6" fill="#232325"/>
 <text x="1792.3" y="26.6" font-family="Liberation Sans" font-weight="normal" font-size="20.8" fill="#fff" stroke="#fff" stroke-width="0.6">100%</text>
 <rect x="1853.3" y="10.8" width="37.6" height="17.6" rx="5" fill="none" stroke="#8b8b8d" stroke-width="1.6"/>
 <rect x="1855.6" y="13.1" width="33" height="13" rx="3" fill="#fff"/>
 <path d="M1892.6 16.8Q1895.6 17.3 1895.6 19.6Q1895.6 21.9 1892.6 22.4Z" fill="#8b8b8d"/>
</svg>

</body></html>
